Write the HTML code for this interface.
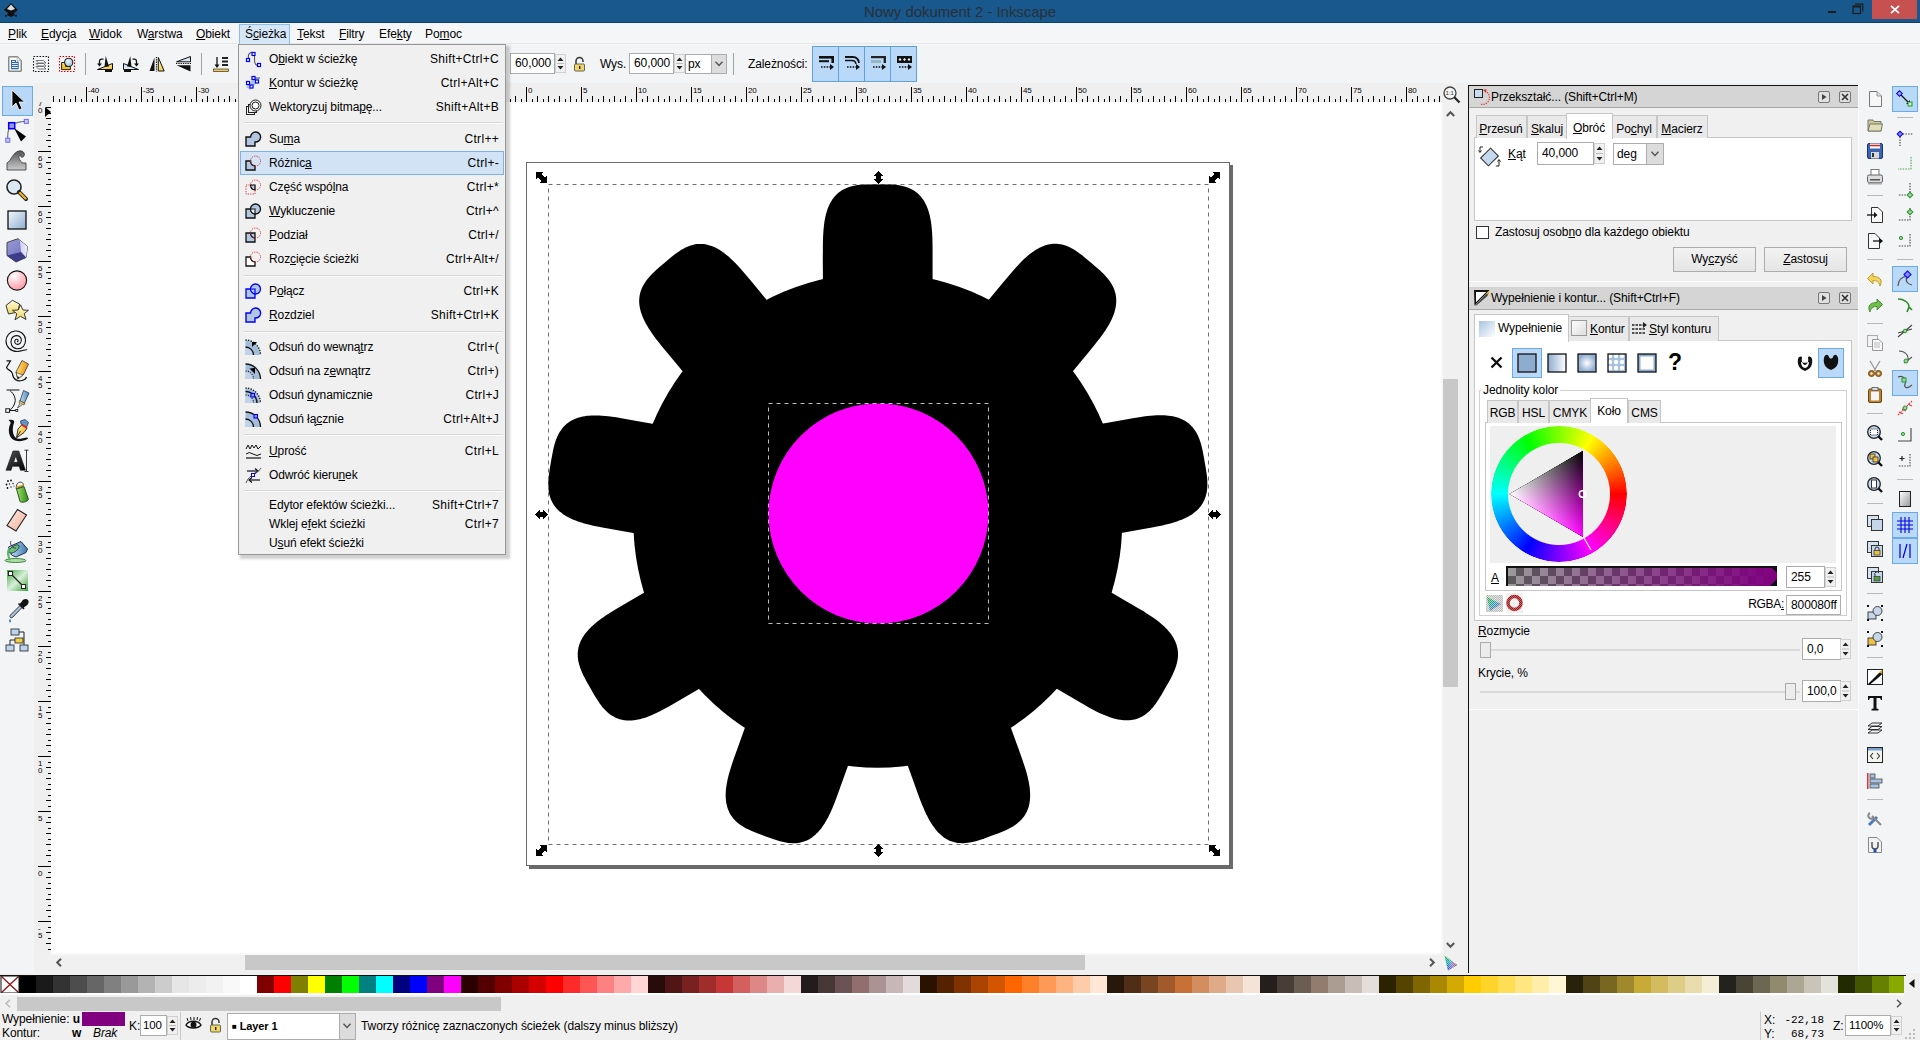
<!DOCTYPE html><html><head><meta charset="utf-8"><style>
*{box-sizing:border-box}
body{margin:0;width:1920px;height:1040px;position:relative;overflow:hidden;background:#f0f0f0;font-family:"Liberation Sans",sans-serif;font-size:12px;color:#000}
.t{position:absolute;white-space:pre;line-height:14px;letter-spacing:-0.1px}
svg{position:absolute;overflow:visible}
u{text-decoration:underline;text-underline-offset:1px}
</style></head><body><div style="position:absolute;left:0px;top:0px;width:1920px;height:22px;background:#18588c"></div><div style="position:absolute;left:0px;top:22px;width:1920px;height:1px;background:#0e3f6b"></div><div class="t" style="left:864px;top:4px;font-size:15px;line-height:15px;color:#2a3038;letter-spacing:-0.05px">Nowy dokument 2 - Inkscape</div><svg style="left:2px;top:2px" width="18" height="18" viewBox="0 0 18 18"><path d="M9 1 L16 8 L12 11 L13 13 L9 15 L5 13 L6 11 L2 8 Z" fill="#111"/><path d="M9 2.5 L13 7 L9 8.5 L5 7 Z" fill="#ddd"/><rect x="3" y="13" width="2" height="1.5" fill="#111"/><rect x="13" y="13" width="2" height="1.5" fill="#111"/></svg><div style="position:absolute;left:1828px;top:11px;width:8px;height:2px;background:#1c1c1c"></div><svg style="left:1852px;top:3px" width="12" height="12" viewBox="0 0 12 12"><rect x="1" y="3" width="7.5" height="7.5" fill="none" stroke="#1c1c1c" stroke-width="1.2"/><rect x="1" y="3" width="7.5" height="1.5" fill="#1c1c1c"/><path d="M3 1.2 H10.8 V8.5" fill="none" stroke="#1c1c1c" stroke-width="1.2"/></svg><div style="position:absolute;left:1872px;top:0px;width:45px;height:19px;background:#c75050"></div><svg style="left:1890px;top:5px" width="10" height="9" viewBox="0 0 10 9"><path d="M1 0.8 L9 8.2 M9 0.8 L1 8.2" stroke="#fff" stroke-width="1.8"/></svg><div style="position:absolute;left:0px;top:23px;width:1920px;height:20px;background:#f5f6f7"></div><div style="position:absolute;left:0px;top:43px;width:1920px;height:1px;background:#e6e7e8"></div><div style="position:absolute;left:239px;top:24px;width:51px;height:20px;background:#d5e6f7;border:1px solid #8cbdeb;border-bottom:none"></div><div class="t" style="left:8px;top:27px;"><u>P</u>lik</div><div class="t" style="left:41px;top:27px;"><u>E</u>dycja</div><div class="t" style="left:89px;top:27px;"><u>W</u>idok</div><div class="t" style="left:137px;top:27px;">W<u>a</u>rstwa</div><div class="t" style="left:196px;top:27px;"><u>O</u>biekt</div><div class="t" style="left:245px;top:27px;">Ś<u>c</u>ieżka</div><div class="t" style="left:297px;top:27px;"><u>T</u>ekst</div><div class="t" style="left:339px;top:27px;"><u>F</u>iltry</div><div class="t" style="left:379px;top:27px;">Efe<u>k</u>ty</div><div class="t" style="left:425px;top:27px;">Po<u>m</u>oc</div><div style="position:absolute;left:0px;top:44px;width:1920px;height:39px;background:#f3f4f6"></div><svg style="left:8px;top:56px" width="14" height="16" viewBox="0 0 14 16"><path d="M0.75 1.5 A0.75 0.75 0 0 1 1.5 0.75 H9.2 L13.25 4.8 V14.5 A0.75 0.75 0 0 1 12.5 15.25 H1.5 A0.75 0.75 0 0 1 0.75 14.5 Z" fill="#fff" stroke="#8a8a85" stroke-width="1.5"/><path d="M9.2 1 V4.8 H13" fill="#eee" stroke="#aaa" stroke-width="0.8"/><path d="M3 4 H8 V5.8 H10.7 V13.2 H3 Z" fill="#2f65b5"/><rect x="4" y="5" width="3" height="0.9" fill="#fff"/><rect x="4" y="7" width="5.8" height="0.9" fill="#fff"/><rect x="4" y="9" width="5.8" height="0.9" fill="#fff"/><rect x="4" y="11" width="5.8" height="0.9" fill="#fff"/></svg><svg style="left:33px;top:56px" width="16" height="16" viewBox="0 0 16 16"><rect x="0.5" y="0.5" width="15" height="15" fill="none" stroke="#111" stroke-width="1.1" stroke-dasharray="1.6 1.4"/><g fill="#fbfbfb" stroke="#6a6a6a" stroke-width="0.9"><path d="M3 10.5 H10.5 L13 13 H5.5 Z"/><path d="M3 7.5 H10.5 L13 10 H5.5 Z"/><path d="M3 4.5 H10.5 L13 7 H5.5 Z"/></g></svg><svg style="left:59px;top:56px" width="16" height="16" viewBox="0 0 16 16"><defs><linearGradient id="ly" x1="0" y1="0" x2="0" y2="1"><stop offset="0" stop-color="#ffe26a"/><stop offset="1" stop-color="#f5b800"/></linearGradient><radialGradient id="lb" cx="0.4" cy="0.35" r="0.7"><stop offset="0" stop-color="#eef5fb"/><stop offset="1" stop-color="#9fbcdc"/></radialGradient></defs><rect x="0.5" y="0.5" width="15" height="15" fill="none" stroke="#e00000" stroke-width="1.1" stroke-dasharray="1.6 1.4"/><path d="M2.6 6.5 H6.5 V10.5 H11.4 V13.6 H2.6 Z" fill="url(#ly)" stroke="#222" stroke-width="1"/><circle cx="9.7" cy="6.4" r="4.1" fill="url(#lb)" stroke="#222" stroke-width="1.1"/></svg><div style="position:absolute;left:85px;top:53px;width:1px;height:22px;background:#a0a0a0"></div><svg style="left:97px;top:56px" width="17" height="17" viewBox="0 0 17 17"><defs><linearGradient id="yg0" x1="0" y1="0" x2="1" y2="1"><stop offset="0" stop-color="#fff6c0"/><stop offset="1" stop-color="#f2c230"/></linearGradient><linearGradient id="bg0" x1="0" y1="0" x2="1" y2="1"><stop offset="0" stop-color="#a8c4e4"/><stop offset="1" stop-color="#eef4fb"/></linearGradient></defs><path d="M0.5 13.5 L15.5 7.5 V13.5 Z" fill="url(#yg0)" stroke="#111" stroke-width="1"/><path d="M8.7 0 L12 10.5 L7.5 11 Z" fill="#111"/><rect x="8" y="13.5" width="7" height="2.5" fill="#111"/><path d="M6.5 3.2 H4.3 A2 2 0 0 0 2.5 5.2 V8" fill="none" stroke="#111" stroke-width="1.3"/><path d="M0 7.5 H5 L2.5 10.5 Z" fill="#111"/></svg><svg style="left:123px;top:56px" width="17" height="17" viewBox="0 0 17 17"><defs><linearGradient id="yg1" x1="0" y1="0" x2="1" y2="1"><stop offset="0" stop-color="#fff6c0"/><stop offset="1" stop-color="#f2c230"/></linearGradient><linearGradient id="bg1" x1="0" y1="0" x2="1" y2="1"><stop offset="0" stop-color="#a8c4e4"/><stop offset="1" stop-color="#eef4fb"/></linearGradient></defs><g transform="translate(16,0) scale(-1,1)"><path d="M0.5 13.5 L15.5 7.5 V13.5 Z" fill="url(#bg1)" stroke="#111" stroke-width="1"/><path d="M8.7 0 L12 10.5 L7.5 11 Z" fill="#111"/><rect x="8" y="13.5" width="7" height="2.5" fill="#111"/><path d="M6.5 3.2 H4.3 A2 2 0 0 0 2.5 5.2 V8" fill="none" stroke="#111" stroke-width="1.3"/><path d="M0 7.5 H5 L2.5 10.5 Z" fill="#111"/></g></svg><svg style="left:149px;top:56px" width="17" height="17" viewBox="0 0 17 17"><defs><linearGradient id="yg2" x1="0" y1="0" x2="1" y2="1"><stop offset="0" stop-color="#fff6c0"/><stop offset="1" stop-color="#f2c230"/></linearGradient><linearGradient id="bg2" x1="0" y1="0" x2="1" y2="1"><stop offset="0" stop-color="#a8c4e4"/><stop offset="1" stop-color="#eef4fb"/></linearGradient></defs><path d="M0.5 15 L5.5 1.5 V15 Z" fill="#111"/><path d="M7.5 1 V15.5" stroke="#111" stroke-width="1.2" stroke-dasharray="1.3 1"/><path d="M9.3 1.5 L15.2 15 H9.3 Z" fill="url(#yg2)" stroke="#111" stroke-width="1"/></svg><svg style="left:176px;top:56px" width="17" height="17" viewBox="0 0 17 17"><defs><linearGradient id="yg3" x1="0" y1="0" x2="1" y2="1"><stop offset="0" stop-color="#fff6c0"/><stop offset="1" stop-color="#f2c230"/></linearGradient><linearGradient id="bg3" x1="0" y1="0" x2="1" y2="1"><stop offset="0" stop-color="#a8c4e4"/><stop offset="1" stop-color="#eef4fb"/></linearGradient></defs><path d="M0.5 5.8 L14.5 0.5 V5.8 Z" fill="url(#bg3)" stroke="#111" stroke-width="1"/><path d="M0 7.5 H15" stroke="#111" stroke-width="1.2" stroke-dasharray="1.3 1"/><path d="M0.5 9.3 H14.5 V15.5 Z" fill="#111"/></svg><div style="position:absolute;left:201px;top:53px;width:1px;height:22px;background:#a0a0a0"></div><svg style="left:213px;top:56px" width="16" height="16" viewBox="0 0 16 16"><path d="M4 1 V11" stroke="#111" stroke-width="1.3"/><path d="M1.5 8.5 L4 12 L6.5 8.5 Z" fill="#111"/><rect x="9" y="1" width="6" height="2" fill="#222"/><rect x="9" y="4.5" width="6" height="2" fill="#222"/><rect x="9" y="8" width="6" height="2" fill="#222"/><rect x="0.5" y="13" width="15" height="2.5" fill="#f2c94c" stroke="#333" stroke-width="0.7"/></svg><div style="position:absolute;left:510px;top:53px;width:45px;height:21px;background:#fff;border:1px solid #acacac;"><div class="t" style="left:4px;top:2px">60,000</div></div><div style="position:absolute;left:555px;top:54px;width:11px;height:19px;background:#f0f0f0;border:1px solid #d0d0d0"></div><svg style="left:557px;top:57px" width="7" height="13" viewBox="0 0 7 13"><path d="M0.5 4 L3.5 0.5 L6.5 4 Z" fill="#222"/><path d="M0.5 9 L3.5 12.5 L6.5 9 Z" fill="#222"/><rect x="0" y="6.0" width="7" height="1" fill="#bbb"/></svg><svg style="left:573px;top:56px" width="13" height="16" viewBox="0 0 13 16"><path d="M3 8 V5 A3.5 3.5 0 0 1 10 5 V6" fill="none" stroke="#333" stroke-width="1.5"/><rect x="1.5" y="8" width="10" height="7" rx="1" fill="#f0d860" stroke="#555" stroke-width="0.9"/><rect x="6" y="10" width="1.4" height="3" fill="#222"/></svg><div class="t" style="left:600px;top:57px;">Wys.</div><div style="position:absolute;left:629px;top:53px;width:45px;height:21px;background:#fff;border:1px solid #acacac;"><div class="t" style="left:4px;top:2px">60,000</div></div><div style="position:absolute;left:674px;top:54px;width:11px;height:19px;background:#f0f0f0;border:1px solid #d0d0d0"></div><svg style="left:676px;top:57px" width="7" height="13" viewBox="0 0 7 13"><path d="M0.5 4 L3.5 0.5 L6.5 4 Z" fill="#222"/><path d="M0.5 9 L3.5 12.5 L6.5 9 Z" fill="#222"/><rect x="0" y="6.0" width="7" height="1" fill="#bbb"/></svg><div style="position:absolute;left:685px;top:54px;width:42px;height:20px;background:#fff;border:1px solid #acacac"><div class="t" style="left:2px;top:2px">px</div></div><div style="position:absolute;left:711px;top:54px;width:16px;height:20px;background:#dcdcdc;border:1px solid #acacac"></div><svg style="left:715px;top:61px" width="8" height="6" viewBox="0 0 8 6"><path d="M0.5 0.8 L4 4.5 L7.5 0.8" fill="none" stroke="#555" stroke-width="1.4"/></svg><div style="position:absolute;left:733px;top:53px;width:1px;height:22px;background:#a0a0a0"></div><div class="t" style="left:748px;top:57px;">Zależności:</div><div style="position:absolute;left:812px;top:46px;width:27px;height:36px;background:#bad8f7;border:1px solid #5fa0e0"></div><div style="position:absolute;left:838px;top:46px;width:27px;height:36px;background:#bad8f7;border:1px solid #5fa0e0"></div><div style="position:absolute;left:864px;top:46px;width:27px;height:36px;background:#bad8f7;border:1px solid #5fa0e0"></div><div style="position:absolute;left:890px;top:46px;width:27px;height:36px;background:#bad8f7;border:1px solid #5fa0e0"></div><svg style="left:818px;top:55px" width="17" height="17" viewBox="0 0 17 17"><rect x="1" y="1" width="15" height="2.6" fill="#111"/><rect x="13.4" y="1" width="2.6" height="7" fill="#111"/><rect x="1" y="5.2" width="10" height="2" fill="#111"/><path d="M3 12 H12" stroke="#111" stroke-dasharray="1.6 1.2" stroke-width="1.3"/><path d="M12 9 L16 12 L12 15 Z" fill="#111"/></svg><svg style="left:844px;top:55px" width="17" height="17" viewBox="0 0 17 17"><path d="M1 2 H9 A6 6 0 0 1 15 8" fill="none" stroke="#111" stroke-width="1.8"/><path d="M1 5.5 H8 A4 4 0 0 1 12 9" fill="none" stroke="#111" stroke-width="1.3"/><path d="M3 12 H12" stroke="#111" stroke-dasharray="1.6 1.2" stroke-width="1.3"/><path d="M12 9 L16 12 L12 15 Z" fill="#111"/></svg><svg style="left:870px;top:55px" width="17" height="17" viewBox="0 0 17 17"><rect x="1" y="1" width="15" height="2.2" fill="#222"/><rect x="13.6" y="1" width="2.4" height="7" fill="#222"/><rect x="1" y="5" width="10" height="3" fill="#8aa" opacity="0.7"/><path d="M3 12 H12" stroke="#111" stroke-dasharray="1.6 1.2" stroke-width="1.3"/><path d="M12 9 L16 12 L12 15 Z" fill="#111"/></svg><svg style="left:896px;top:55px" width="17" height="17" viewBox="0 0 17 17"><rect x="1" y="1" width="15" height="7" fill="#111"/><path d="M4 3 l1.5 1.5 l-1.5 1.5 l-1.5 -1.5 Z M8.5 3 l1.5 1.5 l-1.5 1.5 l-1.5 -1.5 Z M13 3 l1.5 1.5 l-1.5 1.5 l-1.5 -1.5 Z" fill="#eee"/><path d="M3 12 H12" stroke="#111" stroke-dasharray="1.6 1.2" stroke-width="1.3"/><path d="M12 9 L16 12 L12 15 Z" fill="#111"/></svg><div style="position:absolute;left:34px;top:83px;width:1409px;height:19px;background:#efefef"></div><div style="position:absolute;left:34px;top:102px;width:17px;height:851px;background:#efefef"></div><svg style="left:34px;top:83px;overflow:hidden" width="1409" height="19" viewBox="0 0 1409 19"><g><rect x="19" y="13" width="1" height="6" fill="#000"/><rect x="25" y="16" width="1" height="3" fill="#000"/><rect x="30" y="13" width="1" height="6" fill="#000"/><rect x="36" y="16" width="1" height="3" fill="#000"/><rect x="41" y="13" width="1" height="6" fill="#000"/><rect x="47" y="16" width="1" height="3" fill="#000"/><rect x="52" y="4" width="1" height="15" fill="#000"/><rect x="58" y="16" width="1" height="3" fill="#000"/><rect x="63" y="13" width="1" height="6" fill="#000"/><rect x="69" y="16" width="1" height="3" fill="#000"/><rect x="74" y="13" width="1" height="6" fill="#000"/><rect x="80" y="16" width="1" height="3" fill="#000"/><rect x="85" y="13" width="1" height="6" fill="#000"/><rect x="91" y="16" width="1" height="3" fill="#000"/><rect x="96" y="13" width="1" height="6" fill="#000"/><rect x="102" y="16" width="1" height="3" fill="#000"/><rect x="107" y="4" width="1" height="15" fill="#000"/><rect x="113" y="16" width="1" height="3" fill="#000"/><rect x="118" y="13" width="1" height="6" fill="#000"/><rect x="124" y="16" width="1" height="3" fill="#000"/><rect x="129" y="13" width="1" height="6" fill="#000"/><rect x="135" y="16" width="1" height="3" fill="#000"/><rect x="140" y="13" width="1" height="6" fill="#000"/><rect x="146" y="16" width="1" height="3" fill="#000"/><rect x="151" y="13" width="1" height="6" fill="#000"/><rect x="157" y="16" width="1" height="3" fill="#000"/><rect x="162" y="4" width="1" height="15" fill="#000"/><rect x="168" y="16" width="1" height="3" fill="#000"/><rect x="173" y="13" width="1" height="6" fill="#000"/><rect x="179" y="16" width="1" height="3" fill="#000"/><rect x="184" y="13" width="1" height="6" fill="#000"/><rect x="190" y="16" width="1" height="3" fill="#000"/><rect x="195" y="13" width="1" height="6" fill="#000"/><rect x="201" y="16" width="1" height="3" fill="#000"/><rect x="206" y="13" width="1" height="6" fill="#000"/><rect x="212" y="16" width="1" height="3" fill="#000"/><rect x="217" y="4" width="1" height="15" fill="#000"/><rect x="223" y="16" width="1" height="3" fill="#000"/><rect x="228" y="13" width="1" height="6" fill="#000"/><rect x="234" y="16" width="1" height="3" fill="#000"/><rect x="239" y="13" width="1" height="6" fill="#000"/><rect x="245" y="16" width="1" height="3" fill="#000"/><rect x="250" y="13" width="1" height="6" fill="#000"/><rect x="256" y="16" width="1" height="3" fill="#000"/><rect x="261" y="13" width="1" height="6" fill="#000"/><rect x="267" y="16" width="1" height="3" fill="#000"/><rect x="272" y="4" width="1" height="15" fill="#000"/><rect x="278" y="16" width="1" height="3" fill="#000"/><rect x="283" y="13" width="1" height="6" fill="#000"/><rect x="289" y="16" width="1" height="3" fill="#000"/><rect x="294" y="13" width="1" height="6" fill="#000"/><rect x="300" y="16" width="1" height="3" fill="#000"/><rect x="305" y="13" width="1" height="6" fill="#000"/><rect x="311" y="16" width="1" height="3" fill="#000"/><rect x="316" y="13" width="1" height="6" fill="#000"/><rect x="322" y="16" width="1" height="3" fill="#000"/><rect x="327" y="4" width="1" height="15" fill="#000"/><rect x="333" y="16" width="1" height="3" fill="#000"/><rect x="338" y="13" width="1" height="6" fill="#000"/><rect x="344" y="16" width="1" height="3" fill="#000"/><rect x="349" y="13" width="1" height="6" fill="#000"/><rect x="355" y="16" width="1" height="3" fill="#000"/><rect x="360" y="13" width="1" height="6" fill="#000"/><rect x="366" y="16" width="1" height="3" fill="#000"/><rect x="371" y="13" width="1" height="6" fill="#000"/><rect x="377" y="16" width="1" height="3" fill="#000"/><rect x="382" y="4" width="1" height="15" fill="#000"/><rect x="388" y="16" width="1" height="3" fill="#000"/><rect x="393" y="13" width="1" height="6" fill="#000"/><rect x="399" y="16" width="1" height="3" fill="#000"/><rect x="404" y="13" width="1" height="6" fill="#000"/><rect x="410" y="16" width="1" height="3" fill="#000"/><rect x="415" y="13" width="1" height="6" fill="#000"/><rect x="421" y="16" width="1" height="3" fill="#000"/><rect x="426" y="13" width="1" height="6" fill="#000"/><rect x="432" y="16" width="1" height="3" fill="#000"/><rect x="437" y="4" width="1" height="15" fill="#000"/><rect x="443" y="16" width="1" height="3" fill="#000"/><rect x="448" y="13" width="1" height="6" fill="#000"/><rect x="454" y="16" width="1" height="3" fill="#000"/><rect x="459" y="13" width="1" height="6" fill="#000"/><rect x="465" y="16" width="1" height="3" fill="#000"/><rect x="470" y="13" width="1" height="6" fill="#000"/><rect x="476" y="16" width="1" height="3" fill="#000"/><rect x="481" y="13" width="1" height="6" fill="#000"/><rect x="487" y="16" width="1" height="3" fill="#000"/><rect x="492" y="4" width="1" height="15" fill="#000"/><rect x="498" y="16" width="1" height="3" fill="#000"/><rect x="503" y="13" width="1" height="6" fill="#000"/><rect x="509" y="16" width="1" height="3" fill="#000"/><rect x="514" y="13" width="1" height="6" fill="#000"/><rect x="520" y="16" width="1" height="3" fill="#000"/><rect x="525" y="13" width="1" height="6" fill="#000"/><rect x="531" y="16" width="1" height="3" fill="#000"/><rect x="536" y="13" width="1" height="6" fill="#000"/><rect x="542" y="16" width="1" height="3" fill="#000"/><rect x="547" y="4" width="1" height="15" fill="#000"/><rect x="553" y="16" width="1" height="3" fill="#000"/><rect x="558" y="13" width="1" height="6" fill="#000"/><rect x="564" y="16" width="1" height="3" fill="#000"/><rect x="569" y="13" width="1" height="6" fill="#000"/><rect x="575" y="16" width="1" height="3" fill="#000"/><rect x="580" y="13" width="1" height="6" fill="#000"/><rect x="586" y="16" width="1" height="3" fill="#000"/><rect x="591" y="13" width="1" height="6" fill="#000"/><rect x="597" y="16" width="1" height="3" fill="#000"/><rect x="602" y="4" width="1" height="15" fill="#000"/><rect x="608" y="16" width="1" height="3" fill="#000"/><rect x="613" y="13" width="1" height="6" fill="#000"/><rect x="619" y="16" width="1" height="3" fill="#000"/><rect x="624" y="13" width="1" height="6" fill="#000"/><rect x="630" y="16" width="1" height="3" fill="#000"/><rect x="635" y="13" width="1" height="6" fill="#000"/><rect x="641" y="16" width="1" height="3" fill="#000"/><rect x="646" y="13" width="1" height="6" fill="#000"/><rect x="652" y="16" width="1" height="3" fill="#000"/><rect x="657" y="4" width="1" height="15" fill="#000"/><rect x="663" y="16" width="1" height="3" fill="#000"/><rect x="668" y="13" width="1" height="6" fill="#000"/><rect x="674" y="16" width="1" height="3" fill="#000"/><rect x="679" y="13" width="1" height="6" fill="#000"/><rect x="685" y="16" width="1" height="3" fill="#000"/><rect x="690" y="13" width="1" height="6" fill="#000"/><rect x="696" y="16" width="1" height="3" fill="#000"/><rect x="701" y="13" width="1" height="6" fill="#000"/><rect x="707" y="16" width="1" height="3" fill="#000"/><rect x="712" y="4" width="1" height="15" fill="#000"/><rect x="718" y="16" width="1" height="3" fill="#000"/><rect x="723" y="13" width="1" height="6" fill="#000"/><rect x="729" y="16" width="1" height="3" fill="#000"/><rect x="734" y="13" width="1" height="6" fill="#000"/><rect x="740" y="16" width="1" height="3" fill="#000"/><rect x="745" y="13" width="1" height="6" fill="#000"/><rect x="751" y="16" width="1" height="3" fill="#000"/><rect x="756" y="13" width="1" height="6" fill="#000"/><rect x="762" y="16" width="1" height="3" fill="#000"/><rect x="767" y="4" width="1" height="15" fill="#000"/><rect x="773" y="16" width="1" height="3" fill="#000"/><rect x="778" y="13" width="1" height="6" fill="#000"/><rect x="784" y="16" width="1" height="3" fill="#000"/><rect x="789" y="13" width="1" height="6" fill="#000"/><rect x="795" y="16" width="1" height="3" fill="#000"/><rect x="800" y="13" width="1" height="6" fill="#000"/><rect x="806" y="16" width="1" height="3" fill="#000"/><rect x="811" y="13" width="1" height="6" fill="#000"/><rect x="817" y="16" width="1" height="3" fill="#000"/><rect x="822" y="4" width="1" height="15" fill="#000"/><rect x="828" y="16" width="1" height="3" fill="#000"/><rect x="833" y="13" width="1" height="6" fill="#000"/><rect x="839" y="16" width="1" height="3" fill="#000"/><rect x="844" y="13" width="1" height="6" fill="#000"/><rect x="850" y="16" width="1" height="3" fill="#000"/><rect x="855" y="13" width="1" height="6" fill="#000"/><rect x="861" y="16" width="1" height="3" fill="#000"/><rect x="866" y="13" width="1" height="6" fill="#000"/><rect x="872" y="16" width="1" height="3" fill="#000"/><rect x="877" y="4" width="1" height="15" fill="#000"/><rect x="883" y="16" width="1" height="3" fill="#000"/><rect x="888" y="13" width="1" height="6" fill="#000"/><rect x="894" y="16" width="1" height="3" fill="#000"/><rect x="899" y="13" width="1" height="6" fill="#000"/><rect x="905" y="16" width="1" height="3" fill="#000"/><rect x="910" y="13" width="1" height="6" fill="#000"/><rect x="916" y="16" width="1" height="3" fill="#000"/><rect x="921" y="13" width="1" height="6" fill="#000"/><rect x="927" y="16" width="1" height="3" fill="#000"/><rect x="932" y="4" width="1" height="15" fill="#000"/><rect x="938" y="16" width="1" height="3" fill="#000"/><rect x="943" y="13" width="1" height="6" fill="#000"/><rect x="949" y="16" width="1" height="3" fill="#000"/><rect x="954" y="13" width="1" height="6" fill="#000"/><rect x="960" y="16" width="1" height="3" fill="#000"/><rect x="965" y="13" width="1" height="6" fill="#000"/><rect x="971" y="16" width="1" height="3" fill="#000"/><rect x="976" y="13" width="1" height="6" fill="#000"/><rect x="982" y="16" width="1" height="3" fill="#000"/><rect x="987" y="4" width="1" height="15" fill="#000"/><rect x="993" y="16" width="1" height="3" fill="#000"/><rect x="998" y="13" width="1" height="6" fill="#000"/><rect x="1004" y="16" width="1" height="3" fill="#000"/><rect x="1009" y="13" width="1" height="6" fill="#000"/><rect x="1015" y="16" width="1" height="3" fill="#000"/><rect x="1020" y="13" width="1" height="6" fill="#000"/><rect x="1026" y="16" width="1" height="3" fill="#000"/><rect x="1031" y="13" width="1" height="6" fill="#000"/><rect x="1037" y="16" width="1" height="3" fill="#000"/><rect x="1042" y="4" width="1" height="15" fill="#000"/><rect x="1048" y="16" width="1" height="3" fill="#000"/><rect x="1053" y="13" width="1" height="6" fill="#000"/><rect x="1059" y="16" width="1" height="3" fill="#000"/><rect x="1064" y="13" width="1" height="6" fill="#000"/><rect x="1070" y="16" width="1" height="3" fill="#000"/><rect x="1075" y="13" width="1" height="6" fill="#000"/><rect x="1081" y="16" width="1" height="3" fill="#000"/><rect x="1086" y="13" width="1" height="6" fill="#000"/><rect x="1092" y="16" width="1" height="3" fill="#000"/><rect x="1097" y="4" width="1" height="15" fill="#000"/><rect x="1103" y="16" width="1" height="3" fill="#000"/><rect x="1108" y="13" width="1" height="6" fill="#000"/><rect x="1114" y="16" width="1" height="3" fill="#000"/><rect x="1119" y="13" width="1" height="6" fill="#000"/><rect x="1125" y="16" width="1" height="3" fill="#000"/><rect x="1130" y="13" width="1" height="6" fill="#000"/><rect x="1136" y="16" width="1" height="3" fill="#000"/><rect x="1141" y="13" width="1" height="6" fill="#000"/><rect x="1147" y="16" width="1" height="3" fill="#000"/><rect x="1152" y="4" width="1" height="15" fill="#000"/><rect x="1158" y="16" width="1" height="3" fill="#000"/><rect x="1163" y="13" width="1" height="6" fill="#000"/><rect x="1169" y="16" width="1" height="3" fill="#000"/><rect x="1174" y="13" width="1" height="6" fill="#000"/><rect x="1180" y="16" width="1" height="3" fill="#000"/><rect x="1185" y="13" width="1" height="6" fill="#000"/><rect x="1191" y="16" width="1" height="3" fill="#000"/><rect x="1196" y="13" width="1" height="6" fill="#000"/><rect x="1202" y="16" width="1" height="3" fill="#000"/><rect x="1207" y="4" width="1" height="15" fill="#000"/><rect x="1213" y="16" width="1" height="3" fill="#000"/><rect x="1218" y="13" width="1" height="6" fill="#000"/><rect x="1224" y="16" width="1" height="3" fill="#000"/><rect x="1229" y="13" width="1" height="6" fill="#000"/><rect x="1235" y="16" width="1" height="3" fill="#000"/><rect x="1240" y="13" width="1" height="6" fill="#000"/><rect x="1246" y="16" width="1" height="3" fill="#000"/><rect x="1251" y="13" width="1" height="6" fill="#000"/><rect x="1257" y="16" width="1" height="3" fill="#000"/><rect x="1262" y="4" width="1" height="15" fill="#000"/><rect x="1268" y="16" width="1" height="3" fill="#000"/><rect x="1273" y="13" width="1" height="6" fill="#000"/><rect x="1279" y="16" width="1" height="3" fill="#000"/><rect x="1284" y="13" width="1" height="6" fill="#000"/><rect x="1290" y="16" width="1" height="3" fill="#000"/><rect x="1295" y="13" width="1" height="6" fill="#000"/><rect x="1301" y="16" width="1" height="3" fill="#000"/><rect x="1306" y="13" width="1" height="6" fill="#000"/><rect x="1312" y="16" width="1" height="3" fill="#000"/><rect x="1317" y="4" width="1" height="15" fill="#000"/><rect x="1323" y="16" width="1" height="3" fill="#000"/><rect x="1328" y="13" width="1" height="6" fill="#000"/><rect x="1334" y="16" width="1" height="3" fill="#000"/><rect x="1339" y="13" width="1" height="6" fill="#000"/><rect x="1345" y="16" width="1" height="3" fill="#000"/><rect x="1350" y="13" width="1" height="6" fill="#000"/><rect x="1356" y="16" width="1" height="3" fill="#000"/><rect x="1361" y="13" width="1" height="6" fill="#000"/><rect x="1367" y="16" width="1" height="3" fill="#000"/><rect x="1372" y="4" width="1" height="15" fill="#000"/><rect x="1378" y="16" width="1" height="3" fill="#000"/><rect x="1383" y="13" width="1" height="6" fill="#000"/><rect x="1389" y="16" width="1" height="3" fill="#000"/><rect x="1394" y="13" width="1" height="6" fill="#000"/><rect x="1400" y="16" width="1" height="3" fill="#000"/><rect x="1405" y="13" width="1" height="6" fill="#000"/></g><g font-family="Liberation Sans" font-size="8" fill="#000" letter-spacing="-0.2"><text x="54.0" y="9.8">-40</text><text x="109.0" y="9.8">-35</text><text x="164.0" y="9.8">-30</text><text x="219.0" y="9.8">-25</text><text x="274.0" y="9.8">-20</text><text x="329.0" y="9.8">-15</text><text x="384.0" y="9.8">-10</text><text x="439.0" y="9.8">-5</text><text x="494.0" y="9.8">0</text><text x="549.0" y="9.8">5</text><text x="604.0" y="9.8">10</text><text x="659.0" y="9.8">15</text><text x="714.0" y="9.8">20</text><text x="769.0" y="9.8">25</text><text x="824.0" y="9.8">30</text><text x="879.0" y="9.8">35</text><text x="934.0" y="9.8">40</text><text x="989.0" y="9.8">45</text><text x="1044.0" y="9.8">50</text><text x="1099.0" y="9.8">55</text><text x="1154.0" y="9.8">60</text><text x="1209.0" y="9.8">65</text><text x="1264.0" y="9.8">70</text><text x="1319.0" y="9.8">75</text><text x="1374.0" y="9.8">80</text></g></svg><svg style="left:34px;top:102px;overflow:hidden" width="17" height="851" viewBox="0 0 17 851"><g><rect x="12" y="841" width="5" height="1" fill="#000"/><rect x="14" y="847" width="3" height="1" fill="#000"/><rect x="12" y="830" width="5" height="1" fill="#000"/><rect x="14" y="836" width="3" height="1" fill="#000"/><rect x="4" y="819" width="13" height="1" fill="#000"/><rect x="14" y="825" width="3" height="1" fill="#000"/><rect x="12" y="808" width="5" height="1" fill="#000"/><rect x="14" y="814" width="3" height="1" fill="#000"/><rect x="12" y="797" width="5" height="1" fill="#000"/><rect x="14" y="803" width="3" height="1" fill="#000"/><rect x="12" y="786" width="5" height="1" fill="#000"/><rect x="14" y="792" width="3" height="1" fill="#000"/><rect x="12" y="775" width="5" height="1" fill="#000"/><rect x="14" y="781" width="3" height="1" fill="#000"/><rect x="4" y="764" width="13" height="1" fill="#000"/><rect x="14" y="770" width="3" height="1" fill="#000"/><rect x="12" y="753" width="5" height="1" fill="#000"/><rect x="14" y="759" width="3" height="1" fill="#000"/><rect x="12" y="742" width="5" height="1" fill="#000"/><rect x="14" y="748" width="3" height="1" fill="#000"/><rect x="12" y="731" width="5" height="1" fill="#000"/><rect x="14" y="737" width="3" height="1" fill="#000"/><rect x="12" y="720" width="5" height="1" fill="#000"/><rect x="14" y="726" width="3" height="1" fill="#000"/><rect x="4" y="709" width="13" height="1" fill="#000"/><rect x="14" y="715" width="3" height="1" fill="#000"/><rect x="12" y="698" width="5" height="1" fill="#000"/><rect x="14" y="704" width="3" height="1" fill="#000"/><rect x="12" y="687" width="5" height="1" fill="#000"/><rect x="14" y="693" width="3" height="1" fill="#000"/><rect x="12" y="676" width="5" height="1" fill="#000"/><rect x="14" y="682" width="3" height="1" fill="#000"/><rect x="12" y="665" width="5" height="1" fill="#000"/><rect x="14" y="671" width="3" height="1" fill="#000"/><rect x="4" y="654" width="13" height="1" fill="#000"/><rect x="14" y="660" width="3" height="1" fill="#000"/><rect x="12" y="643" width="5" height="1" fill="#000"/><rect x="14" y="649" width="3" height="1" fill="#000"/><rect x="12" y="632" width="5" height="1" fill="#000"/><rect x="14" y="638" width="3" height="1" fill="#000"/><rect x="12" y="621" width="5" height="1" fill="#000"/><rect x="14" y="627" width="3" height="1" fill="#000"/><rect x="12" y="610" width="5" height="1" fill="#000"/><rect x="14" y="616" width="3" height="1" fill="#000"/><rect x="4" y="599" width="13" height="1" fill="#000"/><rect x="14" y="605" width="3" height="1" fill="#000"/><rect x="12" y="588" width="5" height="1" fill="#000"/><rect x="14" y="594" width="3" height="1" fill="#000"/><rect x="12" y="577" width="5" height="1" fill="#000"/><rect x="14" y="583" width="3" height="1" fill="#000"/><rect x="12" y="566" width="5" height="1" fill="#000"/><rect x="14" y="572" width="3" height="1" fill="#000"/><rect x="12" y="555" width="5" height="1" fill="#000"/><rect x="14" y="561" width="3" height="1" fill="#000"/><rect x="4" y="544" width="13" height="1" fill="#000"/><rect x="14" y="550" width="3" height="1" fill="#000"/><rect x="12" y="533" width="5" height="1" fill="#000"/><rect x="14" y="539" width="3" height="1" fill="#000"/><rect x="12" y="522" width="5" height="1" fill="#000"/><rect x="14" y="528" width="3" height="1" fill="#000"/><rect x="12" y="511" width="5" height="1" fill="#000"/><rect x="14" y="517" width="3" height="1" fill="#000"/><rect x="12" y="500" width="5" height="1" fill="#000"/><rect x="14" y="506" width="3" height="1" fill="#000"/><rect x="4" y="489" width="13" height="1" fill="#000"/><rect x="14" y="495" width="3" height="1" fill="#000"/><rect x="12" y="478" width="5" height="1" fill="#000"/><rect x="14" y="484" width="3" height="1" fill="#000"/><rect x="12" y="467" width="5" height="1" fill="#000"/><rect x="14" y="473" width="3" height="1" fill="#000"/><rect x="12" y="456" width="5" height="1" fill="#000"/><rect x="14" y="462" width="3" height="1" fill="#000"/><rect x="12" y="445" width="5" height="1" fill="#000"/><rect x="14" y="451" width="3" height="1" fill="#000"/><rect x="4" y="434" width="13" height="1" fill="#000"/><rect x="14" y="440" width="3" height="1" fill="#000"/><rect x="12" y="423" width="5" height="1" fill="#000"/><rect x="14" y="429" width="3" height="1" fill="#000"/><rect x="12" y="412" width="5" height="1" fill="#000"/><rect x="14" y="418" width="3" height="1" fill="#000"/><rect x="12" y="401" width="5" height="1" fill="#000"/><rect x="14" y="407" width="3" height="1" fill="#000"/><rect x="12" y="390" width="5" height="1" fill="#000"/><rect x="14" y="396" width="3" height="1" fill="#000"/><rect x="4" y="379" width="13" height="1" fill="#000"/><rect x="14" y="385" width="3" height="1" fill="#000"/><rect x="12" y="368" width="5" height="1" fill="#000"/><rect x="14" y="374" width="3" height="1" fill="#000"/><rect x="12" y="357" width="5" height="1" fill="#000"/><rect x="14" y="363" width="3" height="1" fill="#000"/><rect x="12" y="346" width="5" height="1" fill="#000"/><rect x="14" y="352" width="3" height="1" fill="#000"/><rect x="12" y="335" width="5" height="1" fill="#000"/><rect x="14" y="341" width="3" height="1" fill="#000"/><rect x="4" y="324" width="13" height="1" fill="#000"/><rect x="14" y="330" width="3" height="1" fill="#000"/><rect x="12" y="313" width="5" height="1" fill="#000"/><rect x="14" y="319" width="3" height="1" fill="#000"/><rect x="12" y="302" width="5" height="1" fill="#000"/><rect x="14" y="308" width="3" height="1" fill="#000"/><rect x="12" y="291" width="5" height="1" fill="#000"/><rect x="14" y="297" width="3" height="1" fill="#000"/><rect x="12" y="280" width="5" height="1" fill="#000"/><rect x="14" y="286" width="3" height="1" fill="#000"/><rect x="4" y="269" width="13" height="1" fill="#000"/><rect x="14" y="275" width="3" height="1" fill="#000"/><rect x="12" y="258" width="5" height="1" fill="#000"/><rect x="14" y="264" width="3" height="1" fill="#000"/><rect x="12" y="247" width="5" height="1" fill="#000"/><rect x="14" y="253" width="3" height="1" fill="#000"/><rect x="12" y="236" width="5" height="1" fill="#000"/><rect x="14" y="242" width="3" height="1" fill="#000"/><rect x="12" y="225" width="5" height="1" fill="#000"/><rect x="14" y="231" width="3" height="1" fill="#000"/><rect x="4" y="214" width="13" height="1" fill="#000"/><rect x="14" y="220" width="3" height="1" fill="#000"/><rect x="12" y="203" width="5" height="1" fill="#000"/><rect x="14" y="209" width="3" height="1" fill="#000"/><rect x="12" y="192" width="5" height="1" fill="#000"/><rect x="14" y="198" width="3" height="1" fill="#000"/><rect x="12" y="181" width="5" height="1" fill="#000"/><rect x="14" y="187" width="3" height="1" fill="#000"/><rect x="12" y="170" width="5" height="1" fill="#000"/><rect x="14" y="176" width="3" height="1" fill="#000"/><rect x="4" y="159" width="13" height="1" fill="#000"/><rect x="14" y="165" width="3" height="1" fill="#000"/><rect x="12" y="148" width="5" height="1" fill="#000"/><rect x="14" y="154" width="3" height="1" fill="#000"/><rect x="12" y="137" width="5" height="1" fill="#000"/><rect x="14" y="143" width="3" height="1" fill="#000"/><rect x="12" y="126" width="5" height="1" fill="#000"/><rect x="14" y="132" width="3" height="1" fill="#000"/><rect x="12" y="115" width="5" height="1" fill="#000"/><rect x="14" y="121" width="3" height="1" fill="#000"/><rect x="4" y="104" width="13" height="1" fill="#000"/><rect x="14" y="110" width="3" height="1" fill="#000"/><rect x="12" y="93" width="5" height="1" fill="#000"/><rect x="14" y="99" width="3" height="1" fill="#000"/><rect x="12" y="82" width="5" height="1" fill="#000"/><rect x="14" y="88" width="3" height="1" fill="#000"/><rect x="12" y="71" width="5" height="1" fill="#000"/><rect x="14" y="77" width="3" height="1" fill="#000"/><rect x="12" y="60" width="5" height="1" fill="#000"/><rect x="14" y="66" width="3" height="1" fill="#000"/><rect x="4" y="49" width="13" height="1" fill="#000"/><rect x="14" y="55" width="3" height="1" fill="#000"/><rect x="12" y="38" width="5" height="1" fill="#000"/><rect x="14" y="44" width="3" height="1" fill="#000"/><rect x="12" y="27" width="5" height="1" fill="#000"/><rect x="14" y="33" width="3" height="1" fill="#000"/><rect x="12" y="16" width="5" height="1" fill="#000"/><rect x="14" y="22" width="3" height="1" fill="#000"/><rect x="12" y="5" width="5" height="1" fill="#000"/><rect x="14" y="11" width="3" height="1" fill="#000"/></g><g font-family="Liberation Sans" font-size="8" fill="#000"><text x="4" y="829.0">-</text><text x="4" y="836.0">5</text><text x="4" y="774.0">0</text><text x="4" y="719.0">5</text><text x="4" y="664.0">1</text><text x="4" y="671.0">0</text><text x="4" y="609.0">1</text><text x="4" y="616.0">5</text><text x="4" y="554.0">2</text><text x="4" y="561.0">0</text><text x="4" y="499.0">2</text><text x="4" y="506.0">5</text><text x="4" y="444.0">3</text><text x="4" y="451.0">0</text><text x="4" y="389.0">3</text><text x="4" y="396.0">5</text><text x="4" y="334.0">4</text><text x="4" y="341.0">0</text><text x="4" y="279.0">4</text><text x="4" y="286.0">5</text><text x="4" y="224.0">5</text><text x="4" y="231.0">0</text><text x="4" y="169.0">5</text><text x="4" y="176.0">5</text><text x="4" y="114.0">6</text><text x="4" y="121.0">0</text><text x="4" y="59.0">6</text><text x="4" y="66.0">5</text><text x="4" y="4.0">7</text><text x="4" y="11.0">0</text></g></svg><svg style="left:45px;top:107px" width="7" height="10" viewBox="0 0 7 10"><path d="M0 0 L6 5 L0 10 Z" fill="#000"/></svg><div style="position:absolute;left:51px;top:102px;width:1392px;height:851px;background:#fff"></div><svg style="left:0;top:0" width="1920" height="1040" viewBox="0 0 1920 1040"><g clip-path="url(#cv)"><defs><clipPath id="cv"><rect x="51" y="102" width="1392" height="851"/></clipPath></defs><rect x="526.5" y="162.5" width="703" height="703" fill="#fff" stroke="#6a6a6a" stroke-width="1"/><rect x="1230" y="165" width="3" height="704" fill="#6a6a6a"/><rect x="529" y="866" width="704" height="3" fill="#6a6a6a"/><g fill="#000" transform="translate(877.811,520.200) scale(1,1.0122)"><circle cx="0" cy="0" r="244.5"/><path transform="rotate(-0.022)" d="M-54.87,-180.10 L-54.87,-260.10 L-54.84,-269.97 L-54.76,-275.19 L-54.63,-279.43 L-54.45,-283.14 L-54.22,-286.48 L-53.93,-289.54 L-53.60,-292.39 L-53.21,-295.06 L-52.76,-297.58 L-52.27,-299.96 L-51.72,-302.22 L-51.12,-304.36 L-50.47,-306.40 L-49.76,-308.34 L-49.00,-310.19 L-48.18,-311.95 L-47.31,-313.63 L-46.39,-315.22 L-45.41,-316.73 L-44.37,-318.17 L-43.27,-319.53 L-42.11,-320.82 L-40.90,-322.03 L-39.62,-323.17 L-38.27,-324.23 L-36.86,-325.23 L-35.37,-326.15 L-33.82,-327.01 L-32.18,-327.80 L-30.45,-328.51 L-28.64,-329.16 L-26.71,-329.74 L-24.67,-330.25 L-22.49,-330.69 L-20.15,-331.06 L-17.60,-331.37 L-14.77,-331.61 L-11.53,-331.78 L-7.54,-331.88 L0.00,-331.91 L7.54,-331.88 L11.53,-331.78 L14.77,-331.61 L17.60,-331.37 L20.15,-331.06 L22.49,-330.69 L24.67,-330.25 L26.71,-329.74 L28.64,-329.16 L30.45,-328.51 L32.18,-327.80 L33.82,-327.01 L35.37,-326.15 L36.86,-325.23 L38.27,-324.23 L39.62,-323.17 L40.90,-322.03 L42.11,-320.82 L43.27,-319.53 L44.37,-318.17 L45.41,-316.73 L46.39,-315.22 L47.31,-313.63 L48.18,-311.95 L49.00,-310.19 L49.76,-308.34 L50.47,-306.40 L51.12,-304.36 L51.72,-302.22 L52.27,-299.96 L52.76,-297.58 L53.21,-295.06 L53.60,-292.39 L53.93,-289.54 L54.22,-286.48 L54.45,-283.14 L54.63,-279.43 L54.76,-275.19 L54.84,-269.97 L54.87,-260.10 L54.87,-180.10Z"/><path transform="rotate(39.978)" d="M-54.87,-180.10 L-54.87,-260.10 L-54.84,-269.97 L-54.76,-275.19 L-54.63,-279.43 L-54.45,-283.14 L-54.22,-286.48 L-53.93,-289.54 L-53.60,-292.39 L-53.21,-295.06 L-52.76,-297.58 L-52.27,-299.96 L-51.72,-302.22 L-51.12,-304.36 L-50.47,-306.40 L-49.76,-308.34 L-49.00,-310.19 L-48.18,-311.95 L-47.31,-313.63 L-46.39,-315.22 L-45.41,-316.73 L-44.37,-318.17 L-43.27,-319.53 L-42.11,-320.82 L-40.90,-322.03 L-39.62,-323.17 L-38.27,-324.23 L-36.86,-325.23 L-35.37,-326.15 L-33.82,-327.01 L-32.18,-327.80 L-30.45,-328.51 L-28.64,-329.16 L-26.71,-329.74 L-24.67,-330.25 L-22.49,-330.69 L-20.15,-331.06 L-17.60,-331.37 L-14.77,-331.61 L-11.53,-331.78 L-7.54,-331.88 L0.00,-331.91 L7.54,-331.88 L11.53,-331.78 L14.77,-331.61 L17.60,-331.37 L20.15,-331.06 L22.49,-330.69 L24.67,-330.25 L26.71,-329.74 L28.64,-329.16 L30.45,-328.51 L32.18,-327.80 L33.82,-327.01 L35.37,-326.15 L36.86,-325.23 L38.27,-324.23 L39.62,-323.17 L40.90,-322.03 L42.11,-320.82 L43.27,-319.53 L44.37,-318.17 L45.41,-316.73 L46.39,-315.22 L47.31,-313.63 L48.18,-311.95 L49.00,-310.19 L49.76,-308.34 L50.47,-306.40 L51.12,-304.36 L51.72,-302.22 L52.27,-299.96 L52.76,-297.58 L53.21,-295.06 L53.60,-292.39 L53.93,-289.54 L54.22,-286.48 L54.45,-283.14 L54.63,-279.43 L54.76,-275.19 L54.84,-269.97 L54.87,-260.10 L54.87,-180.10Z"/><path transform="rotate(79.978)" d="M-54.87,-180.10 L-54.87,-260.10 L-54.84,-269.97 L-54.76,-275.19 L-54.63,-279.43 L-54.45,-283.14 L-54.22,-286.48 L-53.93,-289.54 L-53.60,-292.39 L-53.21,-295.06 L-52.76,-297.58 L-52.27,-299.96 L-51.72,-302.22 L-51.12,-304.36 L-50.47,-306.40 L-49.76,-308.34 L-49.00,-310.19 L-48.18,-311.95 L-47.31,-313.63 L-46.39,-315.22 L-45.41,-316.73 L-44.37,-318.17 L-43.27,-319.53 L-42.11,-320.82 L-40.90,-322.03 L-39.62,-323.17 L-38.27,-324.23 L-36.86,-325.23 L-35.37,-326.15 L-33.82,-327.01 L-32.18,-327.80 L-30.45,-328.51 L-28.64,-329.16 L-26.71,-329.74 L-24.67,-330.25 L-22.49,-330.69 L-20.15,-331.06 L-17.60,-331.37 L-14.77,-331.61 L-11.53,-331.78 L-7.54,-331.88 L0.00,-331.91 L7.54,-331.88 L11.53,-331.78 L14.77,-331.61 L17.60,-331.37 L20.15,-331.06 L22.49,-330.69 L24.67,-330.25 L26.71,-329.74 L28.64,-329.16 L30.45,-328.51 L32.18,-327.80 L33.82,-327.01 L35.37,-326.15 L36.86,-325.23 L38.27,-324.23 L39.62,-323.17 L40.90,-322.03 L42.11,-320.82 L43.27,-319.53 L44.37,-318.17 L45.41,-316.73 L46.39,-315.22 L47.31,-313.63 L48.18,-311.95 L49.00,-310.19 L49.76,-308.34 L50.47,-306.40 L51.12,-304.36 L51.72,-302.22 L52.27,-299.96 L52.76,-297.58 L53.21,-295.06 L53.60,-292.39 L53.93,-289.54 L54.22,-286.48 L54.45,-283.14 L54.63,-279.43 L54.76,-275.19 L54.84,-269.97 L54.87,-260.10 L54.87,-180.10Z"/><path transform="rotate(119.978)" d="M-54.87,-180.10 L-54.87,-260.10 L-54.84,-269.97 L-54.76,-275.19 L-54.63,-279.43 L-54.45,-283.14 L-54.22,-286.48 L-53.93,-289.54 L-53.60,-292.39 L-53.21,-295.06 L-52.76,-297.58 L-52.27,-299.96 L-51.72,-302.22 L-51.12,-304.36 L-50.47,-306.40 L-49.76,-308.34 L-49.00,-310.19 L-48.18,-311.95 L-47.31,-313.63 L-46.39,-315.22 L-45.41,-316.73 L-44.37,-318.17 L-43.27,-319.53 L-42.11,-320.82 L-40.90,-322.03 L-39.62,-323.17 L-38.27,-324.23 L-36.86,-325.23 L-35.37,-326.15 L-33.82,-327.01 L-32.18,-327.80 L-30.45,-328.51 L-28.64,-329.16 L-26.71,-329.74 L-24.67,-330.25 L-22.49,-330.69 L-20.15,-331.06 L-17.60,-331.37 L-14.77,-331.61 L-11.53,-331.78 L-7.54,-331.88 L0.00,-331.91 L7.54,-331.88 L11.53,-331.78 L14.77,-331.61 L17.60,-331.37 L20.15,-331.06 L22.49,-330.69 L24.67,-330.25 L26.71,-329.74 L28.64,-329.16 L30.45,-328.51 L32.18,-327.80 L33.82,-327.01 L35.37,-326.15 L36.86,-325.23 L38.27,-324.23 L39.62,-323.17 L40.90,-322.03 L42.11,-320.82 L43.27,-319.53 L44.37,-318.17 L45.41,-316.73 L46.39,-315.22 L47.31,-313.63 L48.18,-311.95 L49.00,-310.19 L49.76,-308.34 L50.47,-306.40 L51.12,-304.36 L51.72,-302.22 L52.27,-299.96 L52.76,-297.58 L53.21,-295.06 L53.60,-292.39 L53.93,-289.54 L54.22,-286.48 L54.45,-283.14 L54.63,-279.43 L54.76,-275.19 L54.84,-269.97 L54.87,-260.10 L54.87,-180.10Z"/><path transform="rotate(159.978)" d="M-54.87,-180.10 L-54.87,-260.10 L-54.84,-269.97 L-54.76,-275.19 L-54.63,-279.43 L-54.45,-283.14 L-54.22,-286.48 L-53.93,-289.54 L-53.60,-292.39 L-53.21,-295.06 L-52.76,-297.58 L-52.27,-299.96 L-51.72,-302.22 L-51.12,-304.36 L-50.47,-306.40 L-49.76,-308.34 L-49.00,-310.19 L-48.18,-311.95 L-47.31,-313.63 L-46.39,-315.22 L-45.41,-316.73 L-44.37,-318.17 L-43.27,-319.53 L-42.11,-320.82 L-40.90,-322.03 L-39.62,-323.17 L-38.27,-324.23 L-36.86,-325.23 L-35.37,-326.15 L-33.82,-327.01 L-32.18,-327.80 L-30.45,-328.51 L-28.64,-329.16 L-26.71,-329.74 L-24.67,-330.25 L-22.49,-330.69 L-20.15,-331.06 L-17.60,-331.37 L-14.77,-331.61 L-11.53,-331.78 L-7.54,-331.88 L0.00,-331.91 L7.54,-331.88 L11.53,-331.78 L14.77,-331.61 L17.60,-331.37 L20.15,-331.06 L22.49,-330.69 L24.67,-330.25 L26.71,-329.74 L28.64,-329.16 L30.45,-328.51 L32.18,-327.80 L33.82,-327.01 L35.37,-326.15 L36.86,-325.23 L38.27,-324.23 L39.62,-323.17 L40.90,-322.03 L42.11,-320.82 L43.27,-319.53 L44.37,-318.17 L45.41,-316.73 L46.39,-315.22 L47.31,-313.63 L48.18,-311.95 L49.00,-310.19 L49.76,-308.34 L50.47,-306.40 L51.12,-304.36 L51.72,-302.22 L52.27,-299.96 L52.76,-297.58 L53.21,-295.06 L53.60,-292.39 L53.93,-289.54 L54.22,-286.48 L54.45,-283.14 L54.63,-279.43 L54.76,-275.19 L54.84,-269.97 L54.87,-260.10 L54.87,-180.10Z"/><path transform="rotate(199.978)" d="M-54.87,-180.10 L-54.87,-260.10 L-54.84,-269.97 L-54.76,-275.19 L-54.63,-279.43 L-54.45,-283.14 L-54.22,-286.48 L-53.93,-289.54 L-53.60,-292.39 L-53.21,-295.06 L-52.76,-297.58 L-52.27,-299.96 L-51.72,-302.22 L-51.12,-304.36 L-50.47,-306.40 L-49.76,-308.34 L-49.00,-310.19 L-48.18,-311.95 L-47.31,-313.63 L-46.39,-315.22 L-45.41,-316.73 L-44.37,-318.17 L-43.27,-319.53 L-42.11,-320.82 L-40.90,-322.03 L-39.62,-323.17 L-38.27,-324.23 L-36.86,-325.23 L-35.37,-326.15 L-33.82,-327.01 L-32.18,-327.80 L-30.45,-328.51 L-28.64,-329.16 L-26.71,-329.74 L-24.67,-330.25 L-22.49,-330.69 L-20.15,-331.06 L-17.60,-331.37 L-14.77,-331.61 L-11.53,-331.78 L-7.54,-331.88 L0.00,-331.91 L7.54,-331.88 L11.53,-331.78 L14.77,-331.61 L17.60,-331.37 L20.15,-331.06 L22.49,-330.69 L24.67,-330.25 L26.71,-329.74 L28.64,-329.16 L30.45,-328.51 L32.18,-327.80 L33.82,-327.01 L35.37,-326.15 L36.86,-325.23 L38.27,-324.23 L39.62,-323.17 L40.90,-322.03 L42.11,-320.82 L43.27,-319.53 L44.37,-318.17 L45.41,-316.73 L46.39,-315.22 L47.31,-313.63 L48.18,-311.95 L49.00,-310.19 L49.76,-308.34 L50.47,-306.40 L51.12,-304.36 L51.72,-302.22 L52.27,-299.96 L52.76,-297.58 L53.21,-295.06 L53.60,-292.39 L53.93,-289.54 L54.22,-286.48 L54.45,-283.14 L54.63,-279.43 L54.76,-275.19 L54.84,-269.97 L54.87,-260.10 L54.87,-180.10Z"/><path transform="rotate(239.978)" d="M-54.87,-180.10 L-54.87,-260.10 L-54.84,-269.97 L-54.76,-275.19 L-54.63,-279.43 L-54.45,-283.14 L-54.22,-286.48 L-53.93,-289.54 L-53.60,-292.39 L-53.21,-295.06 L-52.76,-297.58 L-52.27,-299.96 L-51.72,-302.22 L-51.12,-304.36 L-50.47,-306.40 L-49.76,-308.34 L-49.00,-310.19 L-48.18,-311.95 L-47.31,-313.63 L-46.39,-315.22 L-45.41,-316.73 L-44.37,-318.17 L-43.27,-319.53 L-42.11,-320.82 L-40.90,-322.03 L-39.62,-323.17 L-38.27,-324.23 L-36.86,-325.23 L-35.37,-326.15 L-33.82,-327.01 L-32.18,-327.80 L-30.45,-328.51 L-28.64,-329.16 L-26.71,-329.74 L-24.67,-330.25 L-22.49,-330.69 L-20.15,-331.06 L-17.60,-331.37 L-14.77,-331.61 L-11.53,-331.78 L-7.54,-331.88 L0.00,-331.91 L7.54,-331.88 L11.53,-331.78 L14.77,-331.61 L17.60,-331.37 L20.15,-331.06 L22.49,-330.69 L24.67,-330.25 L26.71,-329.74 L28.64,-329.16 L30.45,-328.51 L32.18,-327.80 L33.82,-327.01 L35.37,-326.15 L36.86,-325.23 L38.27,-324.23 L39.62,-323.17 L40.90,-322.03 L42.11,-320.82 L43.27,-319.53 L44.37,-318.17 L45.41,-316.73 L46.39,-315.22 L47.31,-313.63 L48.18,-311.95 L49.00,-310.19 L49.76,-308.34 L50.47,-306.40 L51.12,-304.36 L51.72,-302.22 L52.27,-299.96 L52.76,-297.58 L53.21,-295.06 L53.60,-292.39 L53.93,-289.54 L54.22,-286.48 L54.45,-283.14 L54.63,-279.43 L54.76,-275.19 L54.84,-269.97 L54.87,-260.10 L54.87,-180.10Z"/><path transform="rotate(279.978)" d="M-54.87,-180.10 L-54.87,-260.10 L-54.84,-269.97 L-54.76,-275.19 L-54.63,-279.43 L-54.45,-283.14 L-54.22,-286.48 L-53.93,-289.54 L-53.60,-292.39 L-53.21,-295.06 L-52.76,-297.58 L-52.27,-299.96 L-51.72,-302.22 L-51.12,-304.36 L-50.47,-306.40 L-49.76,-308.34 L-49.00,-310.19 L-48.18,-311.95 L-47.31,-313.63 L-46.39,-315.22 L-45.41,-316.73 L-44.37,-318.17 L-43.27,-319.53 L-42.11,-320.82 L-40.90,-322.03 L-39.62,-323.17 L-38.27,-324.23 L-36.86,-325.23 L-35.37,-326.15 L-33.82,-327.01 L-32.18,-327.80 L-30.45,-328.51 L-28.64,-329.16 L-26.71,-329.74 L-24.67,-330.25 L-22.49,-330.69 L-20.15,-331.06 L-17.60,-331.37 L-14.77,-331.61 L-11.53,-331.78 L-7.54,-331.88 L0.00,-331.91 L7.54,-331.88 L11.53,-331.78 L14.77,-331.61 L17.60,-331.37 L20.15,-331.06 L22.49,-330.69 L24.67,-330.25 L26.71,-329.74 L28.64,-329.16 L30.45,-328.51 L32.18,-327.80 L33.82,-327.01 L35.37,-326.15 L36.86,-325.23 L38.27,-324.23 L39.62,-323.17 L40.90,-322.03 L42.11,-320.82 L43.27,-319.53 L44.37,-318.17 L45.41,-316.73 L46.39,-315.22 L47.31,-313.63 L48.18,-311.95 L49.00,-310.19 L49.76,-308.34 L50.47,-306.40 L51.12,-304.36 L51.72,-302.22 L52.27,-299.96 L52.76,-297.58 L53.21,-295.06 L53.60,-292.39 L53.93,-289.54 L54.22,-286.48 L54.45,-283.14 L54.63,-279.43 L54.76,-275.19 L54.84,-269.97 L54.87,-260.10 L54.87,-180.10Z"/><path transform="rotate(319.978)" d="M-54.87,-180.10 L-54.87,-260.10 L-54.84,-269.97 L-54.76,-275.19 L-54.63,-279.43 L-54.45,-283.14 L-54.22,-286.48 L-53.93,-289.54 L-53.60,-292.39 L-53.21,-295.06 L-52.76,-297.58 L-52.27,-299.96 L-51.72,-302.22 L-51.12,-304.36 L-50.47,-306.40 L-49.76,-308.34 L-49.00,-310.19 L-48.18,-311.95 L-47.31,-313.63 L-46.39,-315.22 L-45.41,-316.73 L-44.37,-318.17 L-43.27,-319.53 L-42.11,-320.82 L-40.90,-322.03 L-39.62,-323.17 L-38.27,-324.23 L-36.86,-325.23 L-35.37,-326.15 L-33.82,-327.01 L-32.18,-327.80 L-30.45,-328.51 L-28.64,-329.16 L-26.71,-329.74 L-24.67,-330.25 L-22.49,-330.69 L-20.15,-331.06 L-17.60,-331.37 L-14.77,-331.61 L-11.53,-331.78 L-7.54,-331.88 L0.00,-331.91 L7.54,-331.88 L11.53,-331.78 L14.77,-331.61 L17.60,-331.37 L20.15,-331.06 L22.49,-330.69 L24.67,-330.25 L26.71,-329.74 L28.64,-329.16 L30.45,-328.51 L32.18,-327.80 L33.82,-327.01 L35.37,-326.15 L36.86,-325.23 L38.27,-324.23 L39.62,-323.17 L40.90,-322.03 L42.11,-320.82 L43.27,-319.53 L44.37,-318.17 L45.41,-316.73 L46.39,-315.22 L47.31,-313.63 L48.18,-311.95 L49.00,-310.19 L49.76,-308.34 L50.47,-306.40 L51.12,-304.36 L51.72,-302.22 L52.27,-299.96 L52.76,-297.58 L53.21,-295.06 L53.60,-292.39 L53.93,-289.54 L54.22,-286.48 L54.45,-283.14 L54.63,-279.43 L54.76,-275.19 L54.84,-269.97 L54.87,-260.10 L54.87,-180.10Z"/></g><circle cx="878.5" cy="513.5" r="110" fill="#ff00ff"/><rect x="548.5" y="184.5" width="660" height="660" fill="none" stroke="#6e6e6e" stroke-dasharray="4 4" stroke-width="1"/><rect x="768.5" y="403.5" width="220" height="220" fill="none" stroke="#bdbdbd" stroke-dasharray="4 4" stroke-width="1"/><path d="M536,172h1v1h-1zM537,172h1v1h-1zM538,172h1v1h-1zM539,172h1v1h-1zM540,172h1v1h-1zM541,172h1v1h-1zM542,172h1v1h-1zM536,173h1v1h-1zM537,173h1v1h-1zM538,173h1v1h-1zM539,173h1v1h-1zM540,173h1v1h-1zM541,173h1v1h-1zM536,174h1v1h-1zM537,174h1v1h-1zM538,174h1v1h-1zM539,174h1v1h-1zM540,174h1v1h-1zM541,174h1v1h-1zM536,175h1v1h-1zM537,175h1v1h-1zM538,175h1v1h-1zM539,175h1v1h-1zM540,175h1v1h-1zM541,175h1v1h-1zM542,175h1v1h-1zM536,176h1v1h-1zM537,176h1v1h-1zM538,176h1v1h-1zM539,176h1v1h-1zM540,176h1v1h-1zM541,176h1v1h-1zM542,176h1v1h-1zM543,176h1v1h-1zM546,176h1v1h-1zM536,177h1v1h-1zM537,177h1v1h-1zM538,177h1v1h-1zM539,177h1v1h-1zM540,177h1v1h-1zM541,177h1v1h-1zM542,177h1v1h-1zM543,177h1v1h-1zM544,177h1v1h-1zM545,177h1v1h-1zM546,177h1v1h-1zM536,178h1v1h-1zM539,178h1v1h-1zM540,178h1v1h-1zM541,178h1v1h-1zM542,178h1v1h-1zM543,178h1v1h-1zM544,178h1v1h-1zM545,178h1v1h-1zM546,178h1v1h-1zM540,179h1v1h-1zM541,179h1v1h-1zM542,179h1v1h-1zM543,179h1v1h-1zM544,179h1v1h-1zM545,179h1v1h-1zM546,179h1v1h-1zM541,180h1v1h-1zM542,180h1v1h-1zM543,180h1v1h-1zM544,180h1v1h-1zM545,180h1v1h-1zM546,180h1v1h-1zM541,181h1v1h-1zM542,181h1v1h-1zM543,181h1v1h-1zM544,181h1v1h-1zM545,181h1v1h-1zM546,181h1v1h-1zM540,182h1v1h-1zM541,182h1v1h-1zM542,182h1v1h-1zM543,182h1v1h-1zM544,182h1v1h-1zM545,182h1v1h-1zM546,182h1v1h-1z" fill="#000" shape-rendering="crispEdges"/><path d="M1219,172h1v1h-1zM1218,172h1v1h-1zM1217,172h1v1h-1zM1216,172h1v1h-1zM1215,172h1v1h-1zM1214,172h1v1h-1zM1213,172h1v1h-1zM1219,173h1v1h-1zM1218,173h1v1h-1zM1217,173h1v1h-1zM1216,173h1v1h-1zM1215,173h1v1h-1zM1214,173h1v1h-1zM1219,174h1v1h-1zM1218,174h1v1h-1zM1217,174h1v1h-1zM1216,174h1v1h-1zM1215,174h1v1h-1zM1214,174h1v1h-1zM1219,175h1v1h-1zM1218,175h1v1h-1zM1217,175h1v1h-1zM1216,175h1v1h-1zM1215,175h1v1h-1zM1214,175h1v1h-1zM1213,175h1v1h-1zM1219,176h1v1h-1zM1218,176h1v1h-1zM1217,176h1v1h-1zM1216,176h1v1h-1zM1215,176h1v1h-1zM1214,176h1v1h-1zM1213,176h1v1h-1zM1212,176h1v1h-1zM1209,176h1v1h-1zM1219,177h1v1h-1zM1218,177h1v1h-1zM1217,177h1v1h-1zM1216,177h1v1h-1zM1215,177h1v1h-1zM1214,177h1v1h-1zM1213,177h1v1h-1zM1212,177h1v1h-1zM1211,177h1v1h-1zM1210,177h1v1h-1zM1209,177h1v1h-1zM1219,178h1v1h-1zM1216,178h1v1h-1zM1215,178h1v1h-1zM1214,178h1v1h-1zM1213,178h1v1h-1zM1212,178h1v1h-1zM1211,178h1v1h-1zM1210,178h1v1h-1zM1209,178h1v1h-1zM1215,179h1v1h-1zM1214,179h1v1h-1zM1213,179h1v1h-1zM1212,179h1v1h-1zM1211,179h1v1h-1zM1210,179h1v1h-1zM1209,179h1v1h-1zM1214,180h1v1h-1zM1213,180h1v1h-1zM1212,180h1v1h-1zM1211,180h1v1h-1zM1210,180h1v1h-1zM1209,180h1v1h-1zM1214,181h1v1h-1zM1213,181h1v1h-1zM1212,181h1v1h-1zM1211,181h1v1h-1zM1210,181h1v1h-1zM1209,181h1v1h-1zM1215,182h1v1h-1zM1214,182h1v1h-1zM1213,182h1v1h-1zM1212,182h1v1h-1zM1211,182h1v1h-1zM1210,182h1v1h-1zM1209,182h1v1h-1z" fill="#000" shape-rendering="crispEdges"/><path d="M546,845h1v1h-1zM545,845h1v1h-1zM544,845h1v1h-1zM543,845h1v1h-1zM542,845h1v1h-1zM541,845h1v1h-1zM540,845h1v1h-1zM546,846h1v1h-1zM545,846h1v1h-1zM544,846h1v1h-1zM543,846h1v1h-1zM542,846h1v1h-1zM541,846h1v1h-1zM546,847h1v1h-1zM545,847h1v1h-1zM544,847h1v1h-1zM543,847h1v1h-1zM542,847h1v1h-1zM541,847h1v1h-1zM546,848h1v1h-1zM545,848h1v1h-1zM544,848h1v1h-1zM543,848h1v1h-1zM542,848h1v1h-1zM541,848h1v1h-1zM540,848h1v1h-1zM546,849h1v1h-1zM545,849h1v1h-1zM544,849h1v1h-1zM543,849h1v1h-1zM542,849h1v1h-1zM541,849h1v1h-1zM540,849h1v1h-1zM539,849h1v1h-1zM536,849h1v1h-1zM546,850h1v1h-1zM545,850h1v1h-1zM544,850h1v1h-1zM543,850h1v1h-1zM542,850h1v1h-1zM541,850h1v1h-1zM540,850h1v1h-1zM539,850h1v1h-1zM538,850h1v1h-1zM537,850h1v1h-1zM536,850h1v1h-1zM546,851h1v1h-1zM543,851h1v1h-1zM542,851h1v1h-1zM541,851h1v1h-1zM540,851h1v1h-1zM539,851h1v1h-1zM538,851h1v1h-1zM537,851h1v1h-1zM536,851h1v1h-1zM542,852h1v1h-1zM541,852h1v1h-1zM540,852h1v1h-1zM539,852h1v1h-1zM538,852h1v1h-1zM537,852h1v1h-1zM536,852h1v1h-1zM541,853h1v1h-1zM540,853h1v1h-1zM539,853h1v1h-1zM538,853h1v1h-1zM537,853h1v1h-1zM536,853h1v1h-1zM541,854h1v1h-1zM540,854h1v1h-1zM539,854h1v1h-1zM538,854h1v1h-1zM537,854h1v1h-1zM536,854h1v1h-1zM542,855h1v1h-1zM541,855h1v1h-1zM540,855h1v1h-1zM539,855h1v1h-1zM538,855h1v1h-1zM537,855h1v1h-1zM536,855h1v1h-1z" fill="#000" shape-rendering="crispEdges"/><path d="M1209,845h1v1h-1zM1210,845h1v1h-1zM1211,845h1v1h-1zM1212,845h1v1h-1zM1213,845h1v1h-1zM1214,845h1v1h-1zM1215,845h1v1h-1zM1209,846h1v1h-1zM1210,846h1v1h-1zM1211,846h1v1h-1zM1212,846h1v1h-1zM1213,846h1v1h-1zM1214,846h1v1h-1zM1209,847h1v1h-1zM1210,847h1v1h-1zM1211,847h1v1h-1zM1212,847h1v1h-1zM1213,847h1v1h-1zM1214,847h1v1h-1zM1209,848h1v1h-1zM1210,848h1v1h-1zM1211,848h1v1h-1zM1212,848h1v1h-1zM1213,848h1v1h-1zM1214,848h1v1h-1zM1215,848h1v1h-1zM1209,849h1v1h-1zM1210,849h1v1h-1zM1211,849h1v1h-1zM1212,849h1v1h-1zM1213,849h1v1h-1zM1214,849h1v1h-1zM1215,849h1v1h-1zM1216,849h1v1h-1zM1219,849h1v1h-1zM1209,850h1v1h-1zM1210,850h1v1h-1zM1211,850h1v1h-1zM1212,850h1v1h-1zM1213,850h1v1h-1zM1214,850h1v1h-1zM1215,850h1v1h-1zM1216,850h1v1h-1zM1217,850h1v1h-1zM1218,850h1v1h-1zM1219,850h1v1h-1zM1209,851h1v1h-1zM1212,851h1v1h-1zM1213,851h1v1h-1zM1214,851h1v1h-1zM1215,851h1v1h-1zM1216,851h1v1h-1zM1217,851h1v1h-1zM1218,851h1v1h-1zM1219,851h1v1h-1zM1213,852h1v1h-1zM1214,852h1v1h-1zM1215,852h1v1h-1zM1216,852h1v1h-1zM1217,852h1v1h-1zM1218,852h1v1h-1zM1219,852h1v1h-1zM1214,853h1v1h-1zM1215,853h1v1h-1zM1216,853h1v1h-1zM1217,853h1v1h-1zM1218,853h1v1h-1zM1219,853h1v1h-1zM1214,854h1v1h-1zM1215,854h1v1h-1zM1216,854h1v1h-1zM1217,854h1v1h-1zM1218,854h1v1h-1zM1219,854h1v1h-1zM1213,855h1v1h-1zM1214,855h1v1h-1zM1215,855h1v1h-1zM1216,855h1v1h-1zM1217,855h1v1h-1zM1218,855h1v1h-1zM1219,855h1v1h-1z" fill="#000" shape-rendering="crispEdges"/><path d="M878,171h1v1h-1zM877,172h1v1h-1zM878,172h1v1h-1zM879,172h1v1h-1zM876,173h1v1h-1zM877,173h1v1h-1zM878,173h1v1h-1zM879,173h1v1h-1zM880,173h1v1h-1zM875,174h1v1h-1zM876,174h1v1h-1zM877,174h1v1h-1zM878,174h1v1h-1zM879,174h1v1h-1zM880,174h1v1h-1zM881,174h1v1h-1zM874,175h1v1h-1zM875,175h1v1h-1zM876,175h1v1h-1zM877,175h1v1h-1zM878,175h1v1h-1zM879,175h1v1h-1zM880,175h1v1h-1zM881,175h1v1h-1zM882,175h1v1h-1zM876,176h1v1h-1zM877,176h1v1h-1zM878,176h1v1h-1zM879,176h1v1h-1zM880,176h1v1h-1zM876,177h1v1h-1zM877,177h1v1h-1zM878,177h1v1h-1zM879,177h1v1h-1zM880,177h1v1h-1zM876,178h1v1h-1zM877,178h1v1h-1zM878,178h1v1h-1zM879,178h1v1h-1zM880,178h1v1h-1zM874,179h1v1h-1zM875,179h1v1h-1zM876,179h1v1h-1zM877,179h1v1h-1zM878,179h1v1h-1zM879,179h1v1h-1zM880,179h1v1h-1zM881,179h1v1h-1zM882,179h1v1h-1zM875,180h1v1h-1zM876,180h1v1h-1zM877,180h1v1h-1zM878,180h1v1h-1zM879,180h1v1h-1zM880,180h1v1h-1zM881,180h1v1h-1zM876,181h1v1h-1zM877,181h1v1h-1zM878,181h1v1h-1zM879,181h1v1h-1zM880,181h1v1h-1zM877,182h1v1h-1zM878,182h1v1h-1zM879,182h1v1h-1zM878,183h1v1h-1z" fill="#000" shape-rendering="crispEdges"/><path d="M878,844h1v1h-1zM877,845h1v1h-1zM878,845h1v1h-1zM879,845h1v1h-1zM876,846h1v1h-1zM877,846h1v1h-1zM878,846h1v1h-1zM879,846h1v1h-1zM880,846h1v1h-1zM875,847h1v1h-1zM876,847h1v1h-1zM877,847h1v1h-1zM878,847h1v1h-1zM879,847h1v1h-1zM880,847h1v1h-1zM881,847h1v1h-1zM874,848h1v1h-1zM875,848h1v1h-1zM876,848h1v1h-1zM877,848h1v1h-1zM878,848h1v1h-1zM879,848h1v1h-1zM880,848h1v1h-1zM881,848h1v1h-1zM882,848h1v1h-1zM876,849h1v1h-1zM877,849h1v1h-1zM878,849h1v1h-1zM879,849h1v1h-1zM880,849h1v1h-1zM876,850h1v1h-1zM877,850h1v1h-1zM878,850h1v1h-1zM879,850h1v1h-1zM880,850h1v1h-1zM876,851h1v1h-1zM877,851h1v1h-1zM878,851h1v1h-1zM879,851h1v1h-1zM880,851h1v1h-1zM874,852h1v1h-1zM875,852h1v1h-1zM876,852h1v1h-1zM877,852h1v1h-1zM878,852h1v1h-1zM879,852h1v1h-1zM880,852h1v1h-1zM881,852h1v1h-1zM882,852h1v1h-1zM875,853h1v1h-1zM876,853h1v1h-1zM877,853h1v1h-1zM878,853h1v1h-1zM879,853h1v1h-1zM880,853h1v1h-1zM881,853h1v1h-1zM876,854h1v1h-1zM877,854h1v1h-1zM878,854h1v1h-1zM879,854h1v1h-1zM880,854h1v1h-1zM877,855h1v1h-1zM878,855h1v1h-1zM879,855h1v1h-1zM878,856h1v1h-1z" fill="#000" shape-rendering="crispEdges"/><path d="M535,514h1v1h-1zM536,513h1v1h-1zM536,514h1v1h-1zM536,515h1v1h-1zM537,512h1v1h-1zM537,513h1v1h-1zM537,514h1v1h-1zM537,515h1v1h-1zM537,516h1v1h-1zM538,511h1v1h-1zM538,512h1v1h-1zM538,513h1v1h-1zM538,514h1v1h-1zM538,515h1v1h-1zM538,516h1v1h-1zM538,517h1v1h-1zM539,510h1v1h-1zM539,511h1v1h-1zM539,512h1v1h-1zM539,513h1v1h-1zM539,514h1v1h-1zM539,515h1v1h-1zM539,516h1v1h-1zM539,517h1v1h-1zM539,518h1v1h-1zM540,512h1v1h-1zM540,513h1v1h-1zM540,514h1v1h-1zM540,515h1v1h-1zM540,516h1v1h-1zM541,512h1v1h-1zM541,513h1v1h-1zM541,514h1v1h-1zM541,515h1v1h-1zM541,516h1v1h-1zM542,512h1v1h-1zM542,513h1v1h-1zM542,514h1v1h-1zM542,515h1v1h-1zM542,516h1v1h-1zM543,510h1v1h-1zM543,511h1v1h-1zM543,512h1v1h-1zM543,513h1v1h-1zM543,514h1v1h-1zM543,515h1v1h-1zM543,516h1v1h-1zM543,517h1v1h-1zM543,518h1v1h-1zM544,511h1v1h-1zM544,512h1v1h-1zM544,513h1v1h-1zM544,514h1v1h-1zM544,515h1v1h-1zM544,516h1v1h-1zM544,517h1v1h-1zM545,512h1v1h-1zM545,513h1v1h-1zM545,514h1v1h-1zM545,515h1v1h-1zM545,516h1v1h-1zM546,513h1v1h-1zM546,514h1v1h-1zM546,515h1v1h-1zM547,514h1v1h-1z" fill="#000" shape-rendering="crispEdges"/><path d="M1208,514h1v1h-1zM1209,513h1v1h-1zM1209,514h1v1h-1zM1209,515h1v1h-1zM1210,512h1v1h-1zM1210,513h1v1h-1zM1210,514h1v1h-1zM1210,515h1v1h-1zM1210,516h1v1h-1zM1211,511h1v1h-1zM1211,512h1v1h-1zM1211,513h1v1h-1zM1211,514h1v1h-1zM1211,515h1v1h-1zM1211,516h1v1h-1zM1211,517h1v1h-1zM1212,510h1v1h-1zM1212,511h1v1h-1zM1212,512h1v1h-1zM1212,513h1v1h-1zM1212,514h1v1h-1zM1212,515h1v1h-1zM1212,516h1v1h-1zM1212,517h1v1h-1zM1212,518h1v1h-1zM1213,512h1v1h-1zM1213,513h1v1h-1zM1213,514h1v1h-1zM1213,515h1v1h-1zM1213,516h1v1h-1zM1214,512h1v1h-1zM1214,513h1v1h-1zM1214,514h1v1h-1zM1214,515h1v1h-1zM1214,516h1v1h-1zM1215,512h1v1h-1zM1215,513h1v1h-1zM1215,514h1v1h-1zM1215,515h1v1h-1zM1215,516h1v1h-1zM1216,510h1v1h-1zM1216,511h1v1h-1zM1216,512h1v1h-1zM1216,513h1v1h-1zM1216,514h1v1h-1zM1216,515h1v1h-1zM1216,516h1v1h-1zM1216,517h1v1h-1zM1216,518h1v1h-1zM1217,511h1v1h-1zM1217,512h1v1h-1zM1217,513h1v1h-1zM1217,514h1v1h-1zM1217,515h1v1h-1zM1217,516h1v1h-1zM1217,517h1v1h-1zM1218,512h1v1h-1zM1218,513h1v1h-1zM1218,514h1v1h-1zM1218,515h1v1h-1zM1218,516h1v1h-1zM1219,513h1v1h-1zM1219,514h1v1h-1zM1219,515h1v1h-1zM1220,514h1v1h-1z" fill="#000" shape-rendering="crispEdges"/></g></svg><div style="position:absolute;left:0px;top:83px;width:34px;height:890px;background:#f3f4f6"></div><div style="position:absolute;left:2px;top:86px;width:31px;height:30px;background:#b9d7f6;border:1px solid #6aaae8"></div><svg style="left:5px;top:88px" width="24" height="24" viewBox="0 0 24 24"><path d="M7 2 L7 19 L11 15 L14 22 L17 20.5 L14 14 L19.5 14 Z" fill="#000" stroke="#fff" stroke-width="0.8"/></svg><svg style="left:5px;top:118px" width="24" height="24" viewBox="0 0 24 24"><path d="M2.7 22 C2.7 14 3 9 8 6.5 C11 4.5 16 3.5 21.3 3.3" fill="none" stroke="#555" stroke-width="1"/><rect x="0.8" y="20.2" width="4" height="4" fill="#ccf" stroke="#66f" stroke-width="1"/><rect x="19.3" y="1.4" width="4" height="4" fill="#ccf" stroke="#66f" stroke-width="1"/><rect x="3.7" y="4.7" width="6" height="6" fill="#99e" stroke="#00f" stroke-width="1.5"/><path d="M9 10 L21 18.5 L16 23.5 Z" fill="#000"/></svg><svg style="left:5px;top:148px" width="24" height="24" viewBox="0 0 24 24"><defs><linearGradient id="tw" x1="0" y1="0" x2="0" y2="1"><stop offset="0" stop-color="#555"/><stop offset="1" stop-color="#ccc"/></linearGradient></defs><path d="M2 15 C6 13 8 4 14 3 C19 2 21 7 18 9 C16 10 15 8 16 7 C13 7 13 12 18 15 L21 15 L21 22 L2 22 Z" fill="url(#tw)" stroke="#333" stroke-width="0.8"/></svg><svg style="left:5px;top:178px" width="24" height="24" viewBox="0 0 24 24"><circle cx="9" cy="9" r="7" fill="#dbe8f5" stroke="#222" stroke-width="1.6"/><path d="M14 14 L21 21" stroke="#222" stroke-width="4" stroke-linecap="round"/><path d="M15 15 L20.5 20.5" stroke="#f0b020" stroke-width="2.4" stroke-linecap="round"/></svg><svg style="left:5px;top:208px" width="24" height="24" viewBox="0 0 24 24"><defs><linearGradient id="rg" x1="0" y1="0" x2="1" y2="1"><stop offset="0" stop-color="#f4f8fc"/><stop offset="1" stop-color="#8daed0"/></linearGradient></defs><rect x="3" y="3" width="18" height="18" fill="url(#rg)" stroke="#111" stroke-width="1.3"/></svg><svg style="left:5px;top:238px" width="24" height="24" viewBox="0 0 24 24"><defs><linearGradient id="b3l" x1="0" y1="0" x2="1" y2="1"><stop offset="0" stop-color="#9a9ad8"/><stop offset="1" stop-color="#6a6ab8"/></linearGradient><linearGradient id="b3r" x1="0" y1="0" x2="1" y2="0"><stop offset="0" stop-color="#c8c8ee"/><stop offset="1" stop-color="#ededfb"/></linearGradient></defs><path d="M2 4.5 L13 0.7 L22.5 8.5 L21 19.5 L11 24 L2 17.5 Z" fill="url(#b3l)" stroke="#444" stroke-width="1"/><path d="M13 0.7 L22.5 8.5 L21 19.5 L16 14 L15 3 Z" fill="url(#b3r)"/><path d="M2 17.5 L16 14 L21 19.5 L11 24 Z" fill="#3c3c88"/></svg><svg style="left:5px;top:269px" width="24" height="24" viewBox="0 0 24 24"><defs><radialGradient id="eg" cx="0.35" cy="0.25" r="0.85"><stop offset="0" stop-color="#fff"/><stop offset="1" stop-color="#ff8f9c"/></radialGradient></defs><circle cx="12" cy="11.5" r="9.6" fill="url(#eg)" stroke="#111" stroke-width="1.1"/></svg><svg style="left:5px;top:299px" width="24" height="24" viewBox="0 0 24 24"><defs><linearGradient id="sg" x1="0" y1="0" x2="0" y2="1"><stop offset="0" stop-color="#fffbe0"/><stop offset="1" stop-color="#f0d860"/></linearGradient></defs><path d="M1 6.5 L7.5 1.3 L14.5 5 L13 13 L3.5 15 Z" fill="url(#sg)" stroke="#222" stroke-width="0.9"/><path d="M15.5 5.8 L18 11 L23.5 11.3 L19.2 14.6 L21 20.5 L15.5 17.3 L10 20.8 L11.8 14.8 L7.5 11.3 L13.2 11 Z" fill="url(#sg)" stroke="#222" stroke-width="0.9"/></svg><svg style="left:5px;top:329px" width="24" height="24" viewBox="0 0 24 24"><path d="M12 13 C13.5 12.5 13.5 10.5 12 10.3 C9.5 10 8.8 13.8 11.2 15 C14.5 16.5 17 13 16.2 10 C15 5.5 8.5 5.5 6.5 10 C4.5 14.5 7.5 19.5 12 19.8 C17.5 20 21 16 20.5 10.5 C20 5 15 1.5 10 2 C4.5 2.5 1 7 1 12 C1 18 6 22.5 12 22.5 C17 22.5 21 20 22 21" fill="none" stroke="#111" stroke-width="1.1"/></svg><svg style="left:5px;top:359px" width="24" height="24" viewBox="0 0 24 24"><defs><linearGradient id="pg" x1="0" y1="0" x2="1" y2="0.3"><stop offset="0" stop-color="#fff080"/><stop offset="1" stop-color="#f09010"/></linearGradient></defs><path d="M1.5 1.8 H5.5 L1.5 8.5 C2.5 11.5 7 11 7.5 15 C8 21 13 22.5 17 21.5 C19.5 21 21 19.5 21.5 18" fill="none" stroke="#111" stroke-width="1.2"/><path d="M12.8 20 L11 13 L17 1.5 L23.5 5 L18.5 15.5 Z" fill="url(#pg)" stroke="#333" stroke-width="0.8"/><path d="M12.8 20 L11 13 C13 14.5 16 15.5 18.5 15.5 Z" fill="#fdf3dc" stroke="#333" stroke-width="0.7"/><path d="M12.8 20 L12.2 17.3 L14.3 18 Z" fill="#111"/></svg><svg style="left:5px;top:389px" width="24" height="24" viewBox="0 0 24 24"><defs><linearGradient id="nb" x1="0" y1="0" x2="1" y2="0"><stop offset="0" stop-color="#bfe0f0"/><stop offset="1" stop-color="#4a88b8"/></linearGradient></defs><path d="M1.5 1 H14.5" stroke="#111" stroke-width="1"/><path d="M5 1.5 C9 5 12 10 9 16 C8 18.5 6 20.5 4 21.5" fill="none" stroke="#111" stroke-width="1"/><path d="M4.5 21.5 H11" stroke="#111" stroke-width="1"/><rect x="0.8" y="19.8" width="3.8" height="3.5" fill="#fff" stroke="#111" stroke-width="1"/><rect x="10.8" y="20.5" width="2" height="2" fill="#fff" stroke="#111" stroke-width="0.8"/><path d="M15 12 L18.5 1.5 L24 4 L19.5 14 Z" fill="url(#nb)" stroke="#335" stroke-width="0.8"/><path d="M14.5 11.5 L20 14.5 L19 16 L14 13.5 Z" fill="#f5d050" stroke="#333" stroke-width="0.6"/><path d="M15 14 L12.5 19 L17.5 15.5" fill="#ddd" stroke="#333" stroke-width="0.7"/></svg><svg style="left:5px;top:419px" width="24" height="24" viewBox="0 0 24 24"><defs><linearGradient id="cg" x1="0" y1="0" x2="1" y2="1"><stop offset="0" stop-color="#fff4b0"/><stop offset="1" stop-color="#e8a800"/></linearGradient></defs><path d="M3.5 1 C7.5 0 10 1 9 4 C7.5 8 7 14 10 18 C12.5 21 17 19.5 21 18.5 C23 18 23.5 19.5 22.5 20 C18 22.5 12 23 8 20.5 C3 17 3 9 5.5 4.5 C6 3.5 5 2.5 3.5 1 Z" fill="#111"/><path d="M11.5 19 L13 10 L17 5.5 L22 9.5 L19 13.5 Z" fill="url(#cg)" stroke="#222" stroke-width="0.9"/><path d="M12 18 L15.5 12" stroke="#222" stroke-width="0.9"/><path d="M15.5 2 L20 0.5 L23.5 3.5 L21.5 8.5 L16 5 Z" fill="#5a9ac8" stroke="#224" stroke-width="0.7"/><path d="M16.5 5.5 L22 9" stroke="#e02020" stroke-width="2"/></svg><svg style="left:5px;top:449px" width="24" height="24" viewBox="0 0 24 24"><defs><linearGradient id="ag" x1="0" y1="0" x2="1" y2="1"><stop offset="0" stop-color="#555"/><stop offset="1" stop-color="#000"/></linearGradient></defs><path d="M1 21.3 L8 2 H13.8 L20.5 21.3 H15.5 L14.2 17.3 H7.3 L6 21.3 Z M8.6 13.3 H12.9 L10.8 6.8 Z" fill="url(#ag)" stroke="#111" stroke-width="0.6"/><path d="M21.5 1.2 V22.5 M19.5 1.2 H23.5 M19.5 22.5 H23.5" stroke="#222" stroke-width="0.9"/></svg><svg style="left:5px;top:479px" width="24" height="24" viewBox="0 0 24 24"><defs><linearGradient id="spg" x1="0" y1="0" x2="1" y2="0"><stop offset="0" stop-color="#9ee070"/><stop offset="1" stop-color="#2e8a10"/></linearGradient></defs><path d="M11.5 10 L19 7.5 L23.5 20.5 C22 23 17 24 15 22.5 Z" fill="url(#spg)" stroke="#1e4a0e" stroke-width="0.9"/><path d="M11 9.5 L18.5 7 L18 4.5 C17 2.5 13 3 12 5 Z" fill="#fff" stroke="#333" stroke-width="0.9"/><path d="M11.5 8 L18.5 6" stroke="#e0b020" stroke-width="1.5"/><g fill="#111"><circle cx="3" cy="2" r="0.9"/><circle cx="6" cy="1.5" r="0.9"/><circle cx="1.5" cy="5.5" r="0.9"/><circle cx="4.5" cy="5" r="0.7"/><circle cx="8" cy="4.5" r="0.7"/><circle cx="2.5" cy="9" r="0.9"/><circle cx="6" cy="8" r="0.7"/><circle cx="9" cy="7" r="0.6"/></g></svg><svg style="left:5px;top:508px" width="24" height="24" viewBox="0 0 24 24"><defs><linearGradient id="erg" x1="0" y1="0" x2="1" y2="1"><stop offset="0" stop-color="#fff2ee"/><stop offset="1" stop-color="#f0a890"/></linearGradient></defs><path d="M2 17.5 L12.5 1.5 L21.5 7 L11 23 Z" fill="url(#erg)" stroke="#222" stroke-width="1.1"/></svg><svg style="left:5px;top:538px" width="24" height="24" viewBox="0 0 24 24"><defs><linearGradient id="bkg" x1="0" y1="0" x2="1" y2="0"><stop offset="0" stop-color="#d0e8f4"/><stop offset="1" stop-color="#3a78b0"/></linearGradient></defs><ellipse cx="10.5" cy="22.5" rx="10.5" ry="2" fill="#a8e0a0" stroke="#2a6a2a" stroke-width="0.8"/><path d="M3.5 9 L16 3.5 L22.5 11 L21 14.5 L11 19 L6.5 17 Z" fill="url(#bkg)" stroke="#1a3050" stroke-width="1"/><ellipse cx="9" cy="11" rx="6" ry="2.8" transform="rotate(-35 9 11)" fill="#6ac070" stroke="#1a3050" stroke-width="0.8"/><path d="M4 11 C2.5 14 3 18 5 22" fill="none" stroke="#5ab860" stroke-width="2.2"/><path d="M6 3 C4 7 9 11 11 10" fill="none" stroke="#333" stroke-width="0.9"/></svg><svg style="left:5px;top:568px" width="24" height="24" viewBox="0 0 24 24"><defs><linearGradient id="gg" x1="0" y1="0" x2="1" y2="1"><stop offset="0" stop-color="#3ea040"/><stop offset="0.5" stop-color="#d8f0d8"/><stop offset="1" stop-color="#3ea040"/></linearGradient></defs><rect x="2" y="2" width="21" height="21" fill="url(#gg)"/><path d="M6 6 L18 18" stroke="#222" stroke-width="1.2"/><rect x="3.5" y="3.5" width="4" height="4" fill="#fff" stroke="#222"/><rect x="16.5" y="16.5" width="4" height="4" fill="#fff" stroke="#222"/></svg><svg style="left:5px;top:598px" width="24" height="24" viewBox="0 0 24 24"><defs><linearGradient id="drg" x1="0" y1="0" x2="1" y2="1"><stop offset="0" stop-color="#e8f0f8"/><stop offset="1" stop-color="#6a90c0"/></linearGradient></defs><path d="M16.5 4 C17.5 1 21.5 0 23 2 C24.5 4 23 7.5 20 8.5 L18.5 10 L14.5 6 Z" fill="#111"/><path d="M15.5 7 L5.5 17 C4.8 17.8 4.8 19 5.5 19.5 C6.2 20 7 19.8 7.7 19.2 L17.5 9 Z" fill="url(#drg)" stroke="#222" stroke-width="0.9"/><path d="M13.5 5.5 L19 11" stroke="#111" stroke-width="1.6"/><path d="M4.5 21.5 C3.5 23 4 24.5 5 24.5 C6 24.5 6.5 23 5.5 21.5 L5 20.5 Z" fill="#4a80c8"/></svg><svg style="left:5px;top:628px" width="24" height="24" viewBox="0 0 24 24"><rect x="6" y="1" width="8" height="6" fill="#bcd4ee" stroke="#333" stroke-width="0.9"/><rect x="10" y="10" width="8" height="5" fill="#f5d040" stroke="#333" stroke-width="0.9"/><rect x="1" y="17" width="8" height="6" fill="#bcd4ee" stroke="#333" stroke-width="0.9"/><rect x="15" y="17" width="8" height="6" fill="#bcd4ee" stroke="#333" stroke-width="0.9"/><path d="M14 4 H19 V17 M5 17 V12 H10" fill="none" stroke="#222" stroke-width="1"/></svg><div style="position:absolute;left:1441px;top:83px;width:27px;height:870px;background:#f0f0f0"></div><div style="position:absolute;left:1441px;top:102px;width:2px;height:851px;background:#f8f8f8"></div><svg style="left:1443px;top:86px" width="18" height="18" viewBox="0 0 18 18"><circle cx="7" cy="7" r="6" fill="#f4f4f4" stroke="#444" stroke-width="1.3"/><text x="2.6" y="9.2" font-size="6" font-family="Liberation Sans" fill="#333">1:1</text><path d="M11.3 11.3 L16.5 16.5" stroke="#222" stroke-width="2.2"/></svg><div style="position:absolute;left:1443px;top:379px;width:15px;height:308px;background:#c8c8c8"></div><svg style="left:1446px;top:111px" width="9" height="6" viewBox="0 0 9 6"><path d="M0.8 5 L4.5 1.2 L8.2 5" fill="none" stroke="#555" stroke-width="2"/></svg><svg style="left:1446px;top:942px" width="9" height="6" viewBox="0 0 9 6"><path d="M0.8 1 L4.5 4.8 L8.2 1" fill="none" stroke="#555" stroke-width="2"/></svg><div style="position:absolute;left:1468px;top:85px;width:390px;height:888px;background:#f0f0f0;border-left:1px solid #111;border-top:1px solid #111"></div><div style="position:absolute;left:1469px;top:86px;width:389px;height:22px;background:#d5d5d5;border-bottom:1px solid #a8a8a8"></div><svg style="left:1474px;top:89px" width="18" height="17" viewBox="0 0 18 17"><rect x="0.5" y="0.5" width="8" height="8" fill="#c9dcf0" stroke="#222"/><path d="M11 2 A6 6 0 1 1 6 15" fill="none" stroke="#e03030" stroke-dasharray="1.2 1.2" stroke-width="1.2"/><path d="M9 1 L12.5 0 L12 4 Z" fill="#e03030"/></svg><div class="t" style="left:1491px;top:90px;">Przekształć... (Shift+Ctrl+M)</div><svg style="left:1818px;top:91px" width="34" height="12" viewBox="0 0 34 12"><rect x="0.5" y="0.5" width="11" height="11" rx="1.5" fill="#e0e0e0" stroke="#777"/><path d="M4 3 L8.5 6 L4 9 Z" fill="#444"/><rect x="21.5" y="0.5" width="11" height="11" rx="1.5" fill="#e0e0e0" stroke="#777"/><path d="M24 3 L30 9 M30 3 L24 9" stroke="#333" stroke-width="1.6"/></svg><div style="position:absolute;left:1474px;top:137px;width:378px;height:84px;background:#fff;border:1px solid #c6c6c6"></div><div style="position:absolute;left:1476px;top:115px;width:51px;height:23px;background:#e9e9e9;border:1px solid #c6c6c6;border-bottom:none"><div class="t" style="left:24px;top:6px;transform:translateX(-50%)"><u>P</u>rzesuń</div></div><div style="position:absolute;left:1527px;top:115px;width:40px;height:23px;background:#e9e9e9;border:1px solid #c6c6c6;border-bottom:none"><div class="t" style="left:19px;top:6px;transform:translateX(-50%)"><u>S</u>kaluj</div></div><div style="position:absolute;left:1612px;top:115px;width:45px;height:23px;background:#e9e9e9;border:1px solid #c6c6c6;border-bottom:none"><div class="t" style="left:21px;top:6px;transform:translateX(-50%)">Po<u>c</u>hyl</div></div><div style="position:absolute;left:1657px;top:115px;width:51px;height:23px;background:#e9e9e9;border:1px solid #c6c6c6;border-bottom:none"><div class="t" style="left:24px;top:6px;transform:translateX(-50%)"><u>M</u>acierz</div></div><div style="position:absolute;left:1566px;top:113px;width:47px;height:26px;background:#fff;border:1px solid #c6c6c6;border-bottom:none;z-index:2"><div class="t" style="left:22px;top:7px;transform:translateX(-50%)"><u>O</u>bróć</div></div><svg style="left:1478px;top:145px" width="24" height="22" viewBox="0 0 24 22"><rect x="6" y="5" width="11" height="14" transform="rotate(45 11.5 12)" fill="#c5d9ee" stroke="#222" stroke-width="1"/><path d="M5 2 H2 V7 M0.5 5.5 L2 7.5 L3.5 5.5" fill="none" stroke="#222" stroke-width="1"/><path d="M18 21 H21 V15 M19.5 16.5 L21 14.5 L22.5 16.5" fill="none" stroke="#222" stroke-width="1"/></svg><div class="t" style="left:1508px;top:147px;"><u>K</u>ąt</div><div style="position:absolute;left:1537px;top:142px;width:57px;height:23px;background:#fff;border:1px solid #acacac;"><div class="t" style="left:4px;top:3px">40,000</div></div><div style="position:absolute;left:1594px;top:143px;width:11px;height:21px;background:#f0f0f0;border:1px solid #d0d0d0"></div><svg style="left:1596px;top:146px" width="7" height="15" viewBox="0 0 7 15"><path d="M0.5 4 L3.5 0.5 L6.5 4 Z" fill="#222"/><path d="M0.5 11 L3.5 14.5 L6.5 11 Z" fill="#222"/><rect x="0" y="7.0" width="7" height="1" fill="#bbb"/></svg><div style="position:absolute;left:1613px;top:143px;width:51px;height:22px;background:#fff;border:1px solid #acacac"><div class="t" style="left:3px;top:3px">deg</div></div><div style="position:absolute;left:1646px;top:144px;width:17px;height:20px;background:#dcdcdc;border-left:1px solid #acacac"></div><svg style="left:1651px;top:151px" width="8" height="6" viewBox="0 0 8 6"><path d="M0.5 0.8 L4 4.5 L7.5 0.8" fill="none" stroke="#555" stroke-width="1.4"/></svg><div style="position:absolute;left:1476px;top:226px;width:13px;height:13px;background:#fff;border:1px solid #333"></div><div class="t" style="left:1495px;top:225px;">Zastosuj osob<u>n</u>o dla każdego obiektu</div><div style="position:absolute;left:1673px;top:247px;width:83px;height:25px;background:linear-gradient(#f2f2f2,#e5e5e5);border:1px solid #acacac"><div class="t" style="left:0;width:81px;text-align:center;top:4px">Wy<u>c</u>zyść</div></div><div style="position:absolute;left:1764px;top:247px;width:83px;height:25px;background:linear-gradient(#f2f2f2,#e5e5e5);border:1px solid #acacac"><div class="t" style="left:0;width:81px;text-align:center;top:4px"><u>Z</u>astosuj</div></div><div style="position:absolute;left:1469px;top:281px;width:389px;height:1px;background:#fff"></div><div style="position:absolute;left:1469px;top:287px;width:389px;height:23px;background:#d5d5d5;border-bottom:1px solid #a8a8a8"></div><svg style="left:1474px;top:290px" width="16" height="16" viewBox="0 0 16 16"><defs><linearGradient id="fsg" x1="0" y1="0" x2="1" y2="1"><stop offset="0" stop-color="#111"/><stop offset="1" stop-color="#777"/></linearGradient></defs><path d="M0 0 H15.5 L0.5 15.5 Z M2 2 V12 L12 2 Z" fill="#111" fill-rule="evenodd"/><path d="M2 2 H12 L2 12 Z" fill="#fff"/><path d="M0.5 16 L11 5 L15 1.5 L13.5 6 L3 15 Z" fill="url(#fsg)"/><path d="M12.5 3 L15.5 0.8 L14.3 5 Z" fill="#f5b000"/></svg><div class="t" style="left:1491px;top:291px;">Wypełnienie i kontur... (Shift+Ctrl+F)</div><svg style="left:1818px;top:292px" width="34" height="12" viewBox="0 0 34 12"><rect x="0.5" y="0.5" width="11" height="11" rx="1.5" fill="#e0e0e0" stroke="#777"/><path d="M4 3 L8.5 6 L4 9 Z" fill="#444"/><rect x="21.5" y="0.5" width="11" height="11" rx="1.5" fill="#e0e0e0" stroke="#777"/><path d="M24 3 L30 9 M30 3 L24 9" stroke="#333" stroke-width="1.6"/></svg><div style="position:absolute;left:1474px;top:340px;width:378px;height:281px;background:#fff;border:1px solid #c6c6c6"></div><div style="position:absolute;left:1568px;top:316px;width:61px;height:25px;background:#e9e9e9;border:1px solid #c6c6c6;border-bottom:none"><div style="position:absolute;left:2px;top:3px;width:16px;height:16px;background:linear-gradient(135deg,#fff,#ddd);border:1px solid #999"></div><div class="t" style="left:21px;top:5px"><u>K</u>ontur</div></div><div style="position:absolute;left:1629px;top:316px;width:90px;height:25px;background:#e9e9e9;border:1px solid #c6c6c6;border-bottom:none"><svg style="left:1px;top:4px" width="18" height="16" viewBox="0 0 18 16"><path d="M1 4 H14 M1 8 H14 M1 12 H14" stroke="#222" stroke-width="1.3" stroke-dasharray="2.5 1"/><path d="M12 1 L16 4 L12 7 Z" fill="#222"/></svg><div class="t" style="left:19px;top:5px"><u>S</u>tyl konturu</div></div><div style="position:absolute;left:1474px;top:314px;width:95px;height:28px;background:#fff;border:1px solid #c6c6c6;border-bottom:none;z-index:2"><div style="position:absolute;left:4px;top:6px;width:16px;height:16px;background:linear-gradient(135deg,#a9c3e0,#fff)"></div><div class="t" style="left:23px;top:6px">Wypełnienie</div></div><svg style="left:1490px;top:356px" width="13" height="13" viewBox="0 0 13 13"><path d="M1.5 1.5 L11.5 11.5 M11.5 1.5 L1.5 11.5" stroke="#111" stroke-width="2.4"/></svg><div style="position:absolute;left:1512px;top:348px;width:30px;height:30px;background:#bad8f7;border:1px solid #6aaae8"></div><svg style="left:1517px;top:353px" width="20" height="20" viewBox="0 0 20 20"><rect x="1" y="1" width="18" height="18" fill="#8eacd0" stroke="#111" stroke-width="1.3"/></svg><svg style="left:1547px;top:353px" width="20" height="20" viewBox="0 0 20 20"><defs><linearGradient id="lg1" x1="0" y1="0" x2="1" y2="0"><stop offset="0" stop-color="#8eacd0"/><stop offset="1" stop-color="#fff"/></linearGradient></defs><rect x="1" y="1" width="18" height="18" fill="url(#lg1)" stroke="#111" stroke-width="1.3"/></svg><svg style="left:1577px;top:353px" width="20" height="20" viewBox="0 0 20 20"><defs><radialGradient id="rg1"><stop offset="0" stop-color="#fff"/><stop offset="1" stop-color="#8eacd0"/></radialGradient></defs><rect x="1" y="1" width="18" height="18" fill="url(#rg1)" stroke="#111" stroke-width="1.3"/></svg><svg style="left:1607px;top:353px" width="20" height="20" viewBox="0 0 20 20"><defs><pattern id="pt1" width="6" height="6" patternUnits="userSpaceOnUse"><rect width="6" height="6" fill="#a7c0de"/><circle cx="3" cy="3" r="2.2" fill="#fff"/></pattern></defs><rect x="1" y="1" width="18" height="18" fill="url(#pt1)" stroke="#111" stroke-width="1.3"/></svg><svg style="left:1637px;top:353px" width="20" height="20" viewBox="0 0 20 20"><rect x="1" y="1" width="18" height="18" fill="#8eacd0" stroke="#111" stroke-width="1.3"/><rect x="3.5" y="3.5" width="13" height="13" fill="#fff"/></svg><div class="t" style="left:1668px;top:350px;font-size:23px;line-height:24px;font-weight:bold">?</div><svg style="left:1797px;top:355px" width="16" height="17" viewBox="0 0 16 17"><path d="M8 16 C2 14 0 9 1 4 C2 1 5 1 5 3 C4 6 6 10 8 10 C10 10 12 6 11 3 C11 1 14 1 15 4 C16 9 14 14 8 16 Z M8 13 C6 13 4 10 4 7 C6 8 10 8 12 7 C12 10 10 13 8 13 Z" fill="#111" fill-rule="evenodd"/></svg><div style="position:absolute;left:1818px;top:348px;width:26px;height:30px;background:#bad8f7;border:1px solid #6aaae8"></div><svg style="left:1823px;top:354px" width="16" height="17" viewBox="0 0 16 17"><path d="M8 16 C2 14 0 9 1 4 C2 0 5 0 6 3 C7 5 9 5 10 3 C11 0 14 0 15 4 C16 9 14 14 8 16 Z" fill="#111"/></svg><div style="position:absolute;left:1479px;top:390px;width:368px;height:226px;border:1px solid #d0d0d0"></div><div class="t" style="left:1481px;top:383px;background:#fff;padding:0 2px">Jednolity kolor</div><div style="position:absolute;left:1485px;top:422px;width:357px;height:169px;background:#fff;border:1px solid #c6c6c6"></div><div style="position:absolute;left:1487px;top:400px;width:31px;height:23px;background:#e9e9e9;border:1px solid #c6c6c6;border-bottom:none"><div class="t" style="left:0;width:29px;text-align:center;top:5px">RGB</div></div><div style="position:absolute;left:1518px;top:400px;width:31px;height:23px;background:#e9e9e9;border:1px solid #c6c6c6;border-bottom:none"><div class="t" style="left:0;width:29px;text-align:center;top:5px">HSL</div></div><div style="position:absolute;left:1549px;top:400px;width:42px;height:23px;background:#e9e9e9;border:1px solid #c6c6c6;border-bottom:none"><div class="t" style="left:0;width:40px;text-align:center;top:5px">CMYK</div></div><div style="position:absolute;left:1628px;top:400px;width:33px;height:23px;background:#e9e9e9;border:1px solid #c6c6c6;border-bottom:none"><div class="t" style="left:0;width:31px;text-align:center;top:5px">CMS</div></div><div style="position:absolute;left:1590px;top:398px;width:38px;height:25px;background:#fff;border:1px solid #c6c6c6;border-bottom:none;z-index:2"><div class="t" style="left:0;width:36px;text-align:center;top:5px">Koło</div></div><div style="position:absolute;left:1490px;top:426px;width:346px;height:137px;background:#efefef"></div><div style="position:absolute;left:1490.5px;top:426px;width:136px;height:136px;border-radius:50%;background:conic-gradient(from 90deg, #f00, #f0f 60deg, #00f 120deg, #0ff 180deg, #0f0 240deg, #ff0 300deg, #f00 360deg);-webkit-mask:radial-gradient(circle, transparent 50.5px, #000 51.5px, #000 67.5px, transparent 68.5px);mask:radial-gradient(circle, transparent 50.5px, #000 51.5px, #000 67.5px, transparent 68.5px)"></div><svg style="left:1490px;top:426px" width="136" height="136" viewBox="1490 426 136 136"><defs><linearGradient id="tgw" gradientUnits="userSpaceOnUse" x1="1509.3" y1="494" x2="1583" y2="494"><stop offset="0" stop-color="#fff"/><stop offset="1" stop-color="#000"/></linearGradient><linearGradient id="tgh" gradientUnits="userSpaceOnUse" x1="1583" y1="537" x2="1546" y2="472.4"><stop offset="0" stop-color="#f0f"/><stop offset="1" stop-color="#000"/></linearGradient></defs><g style="isolation:isolate"><path d="M1583 450.8 L1509.3 494 L1583 537 Z" fill="url(#tgh)"/><path d="M1583 450.8 L1509.3 494 L1583 537 Z" fill="url(#tgw)" style="mix-blend-mode:plus-lighter"/></g><circle cx="1582.5" cy="494" r="3.2" fill="none" stroke="#fff" stroke-width="1.5"/><path d="M1584 538 L1591 550" stroke="#fff" stroke-width="1.2"/></svg><div class="t" style="left:1491px;top:571px;"><u>A</u></div><div style="position:absolute;left:1506px;top:566px;width:271px;height:20px;border-top:2px solid #111;border-left:2px solid #111;background:linear-gradient(to right, rgba(128,0,128,0), #800080),conic-gradient(#5a5a5a 25%, #9a9a9a 0 50%, #5a5a5a 0 75%, #9a9a9a 0) 0 0/16px 16px"></div><svg style="left:1769px;top:566px" width="8" height="20" viewBox="0 0 8 20"><path d="M1 0 H8 V7 Z" fill="#111"/><path d="M1 20 H8 V13 Z" fill="#111"/></svg><div style="position:absolute;left:1786px;top:566px;width:39px;height:22px;background:#fff;border:1px solid #acacac;"><div class="t" style="left:4px;top:3px">255</div></div><div style="position:absolute;left:1825px;top:567px;width:11px;height:20px;background:#f0f0f0;border:1px solid #d0d0d0"></div><svg style="left:1827px;top:570px" width="7" height="14" viewBox="0 0 7 14"><path d="M0.5 4 L3.5 0.5 L6.5 4 Z" fill="#222"/><path d="M0.5 10 L3.5 13.5 L6.5 10 Z" fill="#222"/><rect x="0" y="6.5" width="7" height="1" fill="#bbb"/></svg><svg style="left:1486px;top:595px" width="17" height="17" viewBox="0 0 17 17"><defs><pattern id="dith" width="2" height="2" patternUnits="userSpaceOnUse"><rect width="1" height="1" fill="#fff"/><rect x="1" y="1" width="1" height="1" fill="#fff"/></pattern><linearGradient id="tgc" x1="0" y1="0" x2="1" y2="1"><stop offset="0" stop-color="#2a2"/><stop offset="0.5" stop-color="#29a"/><stop offset="1" stop-color="#a2a"/></linearGradient></defs><rect width="17" height="17" fill="#bbb"/><path d="M1 2 L15 9 L4 16 Z" fill="url(#tgc)"/><rect width="17" height="17" fill="url(#dith)" opacity="0.6"/></svg><svg style="left:1506px;top:593px" width="17" height="20" viewBox="0 0 17 20"><rect width="17" height="20" fill="#eee"/><circle cx="8.5" cy="10" r="6.5" fill="none" stroke="#a01818" stroke-width="3.5"/><rect width="17" height="20" fill="url(#dith)" opacity="0.35"/></svg><div class="t" style="left:1700px;width:84px;top:597px;text-align:right;letter-spacing:-0.3px">RGBA<u>:</u></div><div style="position:absolute;left:1786px;top:595px;width:55px;height:20px;background:#fff;border:1px solid #acacac;"><div class="t" style="left:4px;top:2px">800080ff</div></div><div class="t" style="left:1478px;top:624px;"><u>R</u>ozmycie</div><div style="position:absolute;left:1480px;top:649px;width:320px;height:2px;background:#dadada"></div><div style="position:absolute;left:1480px;top:642px;width:11px;height:16px;background:#ececec;border:1px solid #aaa"></div><div style="position:absolute;left:1802px;top:638px;width:39px;height:22px;background:#fff;border:1px solid #acacac;"><div class="t" style="left:4px;top:3px">0,0</div></div><div style="position:absolute;left:1840px;top:639px;width:11px;height:20px;background:#f0f0f0;border:1px solid #d0d0d0"></div><svg style="left:1842px;top:642px" width="7" height="14" viewBox="0 0 7 14"><path d="M0.5 4 L3.5 0.5 L6.5 4 Z" fill="#222"/><path d="M0.5 10 L3.5 13.5 L6.5 10 Z" fill="#222"/><rect x="0" y="6.5" width="7" height="1" fill="#bbb"/></svg><div class="t" style="left:1478px;top:666px;">Krycie, %</div><div style="position:absolute;left:1480px;top:691px;width:320px;height:2px;background:#dadada"></div><div style="position:absolute;left:1785px;top:683px;width:11px;height:17px;background:#ececec;border:1px solid #aaa"></div><div style="position:absolute;left:1802px;top:680px;width:39px;height:22px;background:#fff;border:1px solid #acacac;"><div class="t" style="left:4px;top:3px">100,0</div></div><div style="position:absolute;left:1840px;top:681px;width:11px;height:20px;background:#f0f0f0;border:1px solid #d0d0d0"></div><svg style="left:1842px;top:684px" width="7" height="14" viewBox="0 0 7 14"><path d="M0.5 4 L3.5 0.5 L6.5 4 Z" fill="#222"/><path d="M0.5 10 L3.5 13.5 L6.5 10 Z" fill="#222"/><rect x="0" y="6.5" width="7" height="1" fill="#bbb"/></svg><div style="position:absolute;left:1469px;top:709px;width:389px;height:1px;background:#fff"></div><div style="position:absolute;left:1858px;top:83px;width:62px;height:890px;background:#f3f4f6"></div><div style="position:absolute;left:1858px;top:83px;width:1px;height:890px;background:#fafafa"></div><div style="position:absolute;left:1892px;top:86px;width:26px;height:26px;background:#bad8f7;border:1px solid #6aaae8"></div><div style="position:absolute;left:1892px;top:266px;width:26px;height:26px;background:#bad8f7;border:1px solid #6aaae8"></div><div style="position:absolute;left:1892px;top:370px;width:26px;height:26px;background:#bad8f7;border:1px solid #6aaae8"></div><div style="position:absolute;left:1892px;top:512px;width:26px;height:26px;background:#bad8f7;border:1px solid #6aaae8"></div><div style="position:absolute;left:1892px;top:538px;width:26px;height:26px;background:#bad8f7;border:1px solid #6aaae8"></div><svg style="left:1867px;top:91px" width="16" height="16" viewBox="0 0 16 16"><path d="M2.5 0.5 H10 L14.5 5 V15.5 H2.5 Z" fill="#f7f7f7" stroke="#777"/><path d="M10 0.5 V5 H14.5" fill="#ddd" stroke="#999"/></svg><svg style="left:1867px;top:117px" width="16" height="16" viewBox="0 0 16 16"><path d="M1 3 H6 L7 4.5 H14 V14 H1 Z" fill="#c8c89a" stroke="#776"/><path d="M1 14 L3 7 H15.5 L14 14 Z" fill="#e0e0b8" stroke="#776"/></svg><svg style="left:1867px;top:143px" width="16" height="16" viewBox="0 0 16 16"><rect x="0.5" y="0.5" width="15" height="15" rx="1.5" fill="#3a64b0" stroke="#1c3470"/><rect x="3" y="0.5" width="10" height="5" fill="#fff"/><rect x="3" y="1.8" width="10" height="1.5" fill="#e02020"/><rect x="4" y="9" width="8" height="6.5" fill="#d8d8d8"/><rect x="5" y="10" width="2" height="4" fill="#333"/></svg><svg style="left:1867px;top:169px" width="16" height="16" viewBox="0 0 16 16"><rect x="4" y="0.5" width="8" height="6" fill="#fff" stroke="#777"/><rect x="0.5" y="6" width="15" height="7.5" rx="1.5" fill="#ddd" stroke="#666"/><rect x="3" y="10" width="10" height="1.5" fill="#555"/><rect x="1" y="13.5" width="14" height="2" fill="#aaa"/></svg><div style="position:absolute;left:1867px;top:195px;width:16px;height:1px;background:#b8b8b8"></div><svg style="left:1867px;top:207px" width="16" height="16" viewBox="0 0 16 16"><path d="M4.5 0.5 H11 L15.5 5 V15.5 H4.5 Z" fill="#f7f7f7" stroke="#333"/><path d="M0 8 H9" stroke="#111" stroke-width="1.3"/><path d="M7 5 L10.5 8 L7 11 Z" fill="#111"/></svg><svg style="left:1867px;top:233px" width="16" height="16" viewBox="0 0 16 16"><path d="M1.5 0.5 H8 L12.5 5 V15.5 H1.5 Z" fill="#f7f7f7" stroke="#333"/><path d="M6 8 H15" stroke="#111" stroke-width="1.3"/><path d="M12.5 5 L16 8 L12.5 11 Z" fill="#111"/></svg><div style="position:absolute;left:1867px;top:259px;width:16px;height:1px;background:#b8b8b8"></div><svg style="left:1867px;top:272px" width="16" height="16" viewBox="0 0 16 16"><path d="M6 1 L0.5 6.5 L6 12 V8.5 C10 8.5 12 10 13 14 C16 8 13 4.5 6 4.5 Z" fill="#f3d35a" stroke="#b08a10" stroke-width="0.8"/></svg><svg style="left:1867px;top:298px" width="16" height="16" viewBox="0 0 16 16"><path d="M10 1 L15.5 6.5 L10 12 V8.5 C6 8.5 4 10 3 14 C0 8 3 4.5 10 4.5 Z" fill="#6cc04a" stroke="#3a7a20" stroke-width="0.8"/></svg><div style="position:absolute;left:1867px;top:323px;width:16px;height:1px;background:#b8b8b8"></div><svg style="left:1867px;top:335px" width="16" height="16" viewBox="0 0 16 16"><rect x="0.5" y="0.5" width="10" height="11" fill="#f2f2f2" stroke="#aaa"/><path d="M5.5 4.5 H12 L15.5 8 V15.5 H5.5 Z" fill="#f7f7f7" stroke="#999"/><path d="M7 8 H13 M7 10 H13 M7 12 H13" stroke="#bbb"/></svg><svg style="left:1867px;top:361px" width="16" height="16" viewBox="0 0 16 16"><path d="M3 0 L9 10 M13 0 L7 10" stroke="#999" stroke-width="1.3"/><circle cx="4.5" cy="12.5" r="3" fill="#b07020" stroke="#7a4a10"/><circle cx="11.5" cy="12.5" r="3" fill="#b07020" stroke="#7a4a10"/><circle cx="4.5" cy="12.5" r="1.2" fill="#f3f4f6"/><circle cx="11.5" cy="12.5" r="1.2" fill="#f3f4f6"/></svg><svg style="left:1867px;top:387px" width="16" height="16" viewBox="0 0 16 16"><rect x="1.5" y="2" width="13" height="13.5" rx="1.5" fill="#b9822e" stroke="#6a4414"/><rect x="4" y="4.5" width="8" height="9" fill="#f7f7f7"/><rect x="5" y="0.5" width="6" height="3" fill="#ddd" stroke="#555" stroke-width="0.8"/></svg><div style="position:absolute;left:1867px;top:413px;width:16px;height:1px;background:#b8b8b8"></div><svg style="left:1867px;top:425px" width="16" height="16" viewBox="0 0 16 16"><circle cx="7" cy="7" r="6.3" fill="#c5daef" stroke="#222" stroke-width="1.3"/><rect x="3.5" y="4" width="7" height="6" fill="#fff" stroke="#222" stroke-dasharray="1 1"/><path d="M11.5 11.5 L15 15" stroke="#111" stroke-width="2.4"/></svg><svg style="left:1867px;top:451px" width="16" height="16" viewBox="0 0 16 16"><circle cx="7" cy="7" r="6.3" fill="#c5daef" stroke="#222" stroke-width="1.3"/><rect x="3" y="3" width="5" height="5" fill="#f0c040" stroke="#333" stroke-width="0.8"/><rect x="6" y="6" width="5" height="5" fill="#f0c040" stroke="#333" stroke-width="0.8"/><path d="M11.5 11.5 L15 15" stroke="#111" stroke-width="2.4"/></svg><svg style="left:1867px;top:477px" width="16" height="16" viewBox="0 0 16 16"><circle cx="7" cy="7" r="6.3" fill="#c5daef" stroke="#222" stroke-width="1.3"/><rect x="4.5" y="3" width="5" height="8" fill="#fff" stroke="#333"/><path d="M11.5 11.5 L15 15" stroke="#111" stroke-width="2.4"/></svg><div style="position:absolute;left:1867px;top:503px;width:16px;height:1px;background:#b8b8b8"></div><svg style="left:1867px;top:515px" width="16" height="16" viewBox="0 0 16 16"><rect x="0.5" y="0.5" width="11" height="11" fill="#d5e3f0" stroke="#333"/><rect x="4.5" y="4.5" width="11" height="11" fill="#c5d6ea" stroke="#333"/></svg><svg style="left:1867px;top:541px" width="16" height="16" viewBox="0 0 16 16"><rect x="0.5" y="0.5" width="11" height="11" fill="#d5e3f0" stroke="#333"/><rect x="4.5" y="4.5" width="11" height="11" fill="#c5d6ea" stroke="#333"/><rect x="7" y="9.5" width="6" height="4.5" fill="#f0c030" stroke="#333" stroke-width="0.7"/><path d="M8 9.5 V8 A2 2 0 0 1 12 8 V9.5" fill="none" stroke="#333"/></svg><svg style="left:1867px;top:567px" width="16" height="16" viewBox="0 0 16 16"><rect x="0.5" y="0.5" width="11" height="11" fill="#d5e3f0" stroke="#333"/><rect x="4.5" y="4.5" width="11" height="11" fill="#c5d6ea" stroke="#333"/><rect x="7" y="9.5" width="6" height="4.5" fill="#50a040" stroke="#333" stroke-width="0.7"/><path d="M8 9.5 V8 A2 2 0 0 1 12 6" fill="none" stroke="#333"/></svg><div style="position:absolute;left:1867px;top:593px;width:16px;height:1px;background:#b8b8b8"></div><svg style="left:1867px;top:605px" width="16" height="16" viewBox="0 0 16 16"><rect x="1" y="7" width="8" height="7" fill="#c5d6ea" stroke="#333" stroke-width="0.9"/><circle cx="10.5" cy="6" r="4.5" fill="#c5d6ea" stroke="#333" stroke-width="0.9"/><rect x="0" y="0" width="2" height="2" fill="#111"/><rect x="14" y="0" width="2" height="2" fill="#111"/><rect x="0" y="14" width="2" height="2" fill="#111"/><rect x="14" y="14" width="2" height="2" fill="#111"/></svg><svg style="left:1867px;top:631px" width="16" height="16" viewBox="0 0 16 16"><rect x="1" y="7" width="8" height="7" fill="#f0c040" stroke="#333" stroke-width="0.9"/><circle cx="10.5" cy="6" r="4.5" fill="#c5d6ea" stroke="#333" stroke-width="0.9"/><rect x="0" y="0" width="2" height="2" fill="#111"/><rect x="14" y="0" width="2" height="2" fill="#111"/><rect x="0" y="14" width="2" height="2" fill="#111"/><rect x="14" y="14" width="2" height="2" fill="#111"/></svg><div style="position:absolute;left:1867px;top:657px;width:16px;height:1px;background:#b8b8b8"></div><svg style="left:1867px;top:669px" width="16" height="16" viewBox="0 0 16 16"><rect x="0.5" y="0.5" width="15" height="15" fill="#fff" stroke="#222"/><path d="M0.5 15.5 L11 5 L15.5 1 V5 L11 9 L3 15.5 Z" fill="#111"/><path d="M12 3 L15.5 1 L15 5 Z" fill="#f0a020"/></svg><svg style="left:1867px;top:695px" width="16" height="16" viewBox="0 0 16 16"><path d="M1 1 H15 V5 H14 L13 3 H9.5 V13.5 L11.5 14 V15.5 H4.5 V14 L6.5 13.5 V3 H3 L2 5 H1 Z" fill="#111"/></svg><svg style="left:1867px;top:721px" width="16" height="16" viewBox="0 0 16 16"><path d="M1 5 L5 2 H15 L11 5 Z M1 8.5 L5 5.5 H15 L11 8.5 Z M1 12 L5 9 H15 L11 12 Z" fill="#f4f4f4" stroke="#222" stroke-width="0.9"/></svg><svg style="left:1867px;top:747px" width="16" height="16" viewBox="0 0 16 16"><rect x="0.5" y="0.5" width="15" height="15" fill="#f4f4f0" stroke="#222"/><rect x="1" y="1" width="14" height="2.5" fill="#7aa0d0"/><path d="M6 6 L3.5 9 L6 12 M10 6 L12.5 9 L10 12" fill="none" stroke="#333" stroke-width="1.1"/></svg><svg style="left:1867px;top:773px" width="16" height="16" viewBox="0 0 16 16"><rect x="0" y="0" width="1.5" height="16" fill="#e03030"/><rect x="3" y="1" width="5" height="4" fill="#a8c4e4" stroke="#333" stroke-width="0.7"/><rect x="3" y="6" width="12" height="4" fill="#a8c4e4" stroke="#333" stroke-width="0.7"/><rect x="3" y="11" width="9" height="4" fill="#a8c4e4" stroke="#333" stroke-width="0.7"/></svg><div style="position:absolute;left:1867px;top:799px;width:16px;height:1px;background:#b8b8b8"></div><svg style="left:1867px;top:811px" width="16" height="16" viewBox="0 0 16 16"><path d="M2 14 L10 6" stroke="#4a7ac0" stroke-width="3"/><path d="M14 14 L5 5 M3 2 A3 3 0 1 0 7 6" fill="none" stroke="#888" stroke-width="2"/></svg><svg style="left:1867px;top:837px" width="16" height="16" viewBox="0 0 16 16"><path d="M1.5 0.5 H10 L14.5 5 V15.5 H1.5 Z" fill="#f2f2f2" stroke="#888"/><path d="M5 5 V9 A3 3 0 0 0 11 9 V5 M8 11 V15" fill="none" stroke="#555" stroke-width="1.5"/><rect x="6.5" y="12" width="3" height="3.5" fill="#2050c0"/></svg><svg style="left:1897px;top:91px" width="16" height="16" viewBox="0 0 16 16"><path d="M3 3 L12 12" stroke="#111" stroke-width="1.2"/><path d="M9 13 L13 13 L13 9 Z" fill="#111"/><rect x="0.5" y="0.5" width="4" height="4" transform="rotate(45 2.5 2.5)" fill="#aac" stroke="#00f"/><rect x="11" y="11" width="4" height="4" fill="#cec" stroke="#292"/></svg><div style="position:absolute;left:1897px;top:117px;width:16px;height:1px;background:#b8b8b8"></div><svg style="left:1897px;top:130px" width="16" height="16" viewBox="0 0 16 16"><path d="M3 4 H16 M3 4 V16" stroke="#444" stroke-dasharray="1.5 1.2" stroke-width="1.1"/><rect x="1" y="2" width="4" height="4" transform="rotate(45 3 4)" fill="#88f" stroke="#00f"/></svg><svg style="left:1897px;top:156px" width="16" height="16" viewBox="0 0 16 16"><path d="M14 1 V13 H1" fill="none" stroke="#4a4" stroke-dasharray="1.5 1.2" stroke-width="1.1"/></svg><svg style="left:1897px;top:182px" width="16" height="16" viewBox="0 0 16 16"><path d="M13 1 V13 H1" fill="none" stroke="#444" stroke-dasharray="1.5 1.2" stroke-width="1.1"/><rect x="11" y="11" width="4" height="4" transform="rotate(45 13 13)" fill="#aca" stroke="#292"/></svg><svg style="left:1897px;top:207px" width="16" height="16" viewBox="0 0 16 16"><path d="M13 1 V13 H1" fill="none" stroke="#444" stroke-dasharray="1.5 1.2" stroke-width="1.1"/><rect x="11" y="3" width="4" height="4" transform="rotate(45 13 5)" fill="#aca" stroke="#292"/></svg><svg style="left:1897px;top:233px" width="16" height="16" viewBox="0 0 16 16"><path d="M13 1 V13 H1" fill="none" stroke="#444" stroke-dasharray="1.5 1.2" stroke-width="1.1"/><circle cx="4" cy="5" r="1.6" fill="#aca" stroke="#292"/></svg><div style="position:absolute;left:1897px;top:259px;width:16px;height:1px;background:#b8b8b8"></div><svg style="left:1897px;top:271px" width="16" height="16" viewBox="0 0 16 16"><path d="M1 15 C1 8 5 6 10 5 C8 10 10 13 15 14" fill="none" stroke="#555" stroke-width="1.2"/><rect x="8" y="1" width="5" height="5" transform="rotate(45 10.5 3.5)" fill="#88f" stroke="#00f"/></svg><svg style="left:1897px;top:297px" width="16" height="16" viewBox="0 0 16 16"><path d="M1 2 C6 2 12 5 12 10 L10 15 M12 10 L15 13" fill="none" stroke="#2a8a2a" stroke-width="1.6"/></svg><svg style="left:1897px;top:323px" width="16" height="16" viewBox="0 0 16 16"><path d="M1 14 L15 2 M1 10 L15 6" stroke="#444" stroke-width="1.1"/><circle cx="8" cy="8" r="1.8" fill="#aca" stroke="#292"/></svg><svg style="left:1897px;top:349px" width="16" height="16" viewBox="0 0 16 16"><path d="M2 2 C8 2 12 6 11 12 M7 14 L15 8" fill="none" stroke="#555" stroke-width="1.1"/><circle cx="9" cy="12" r="2" fill="#aca" stroke="#292"/></svg><svg style="left:1897px;top:375px" width="16" height="16" viewBox="0 0 16 16"><path d="M1 2 C6 0 10 4 8 9 C7 12 9 15 15 10" fill="none" stroke="#555" stroke-width="1.2"/><rect x="5" y="3" width="4" height="4" fill="#aca" stroke="#292"/></svg><svg style="left:1897px;top:400px" width="16" height="16" viewBox="0 0 16 16"><path d="M1 15 L15 1" stroke="#e04040" stroke-width="1.1" stroke-dasharray="2 1"/><path d="M2 12 L6 14 M5 9 L9 11 M11 4 L15 6" stroke="#e04040" stroke-width="1.3"/><circle cx="8" cy="8" r="2" fill="#aca" stroke="#292"/></svg><svg style="left:1897px;top:427px" width="16" height="16" viewBox="0 0 16 16"><path d="M14 1 V14 H1" fill="none" stroke="#444" stroke-width="1.1"/><circle cx="6" cy="7" r="1.6" fill="#aca" stroke="#292"/></svg><svg style="left:1897px;top:453px" width="16" height="16" viewBox="0 0 16 16"><path d="M13 1 V13 H1" fill="none" stroke="#444" stroke-dasharray="1.5 1.2" stroke-width="1.1"/><path d="M5 3 V8 M2.5 5.5 H7.5" stroke="#222" stroke-width="1.2"/></svg><div style="position:absolute;left:1897px;top:479px;width:16px;height:1px;background:#b8b8b8"></div><svg style="left:1897px;top:491px" width="16" height="16" viewBox="0 0 16 16"><defs><linearGradient id="pgg" x1="0" y1="0" x2="1" y2="1"><stop offset="0" stop-color="#fff"/><stop offset="1" stop-color="#999"/></linearGradient></defs><rect x="2.5" y="0.5" width="11" height="15" fill="url(#pgg)" stroke="#222"/></svg><svg style="left:1897px;top:517px" width="16" height="16" viewBox="0 0 16 16"><path d="M4 0 V16 M8 0 V16 M12 0 V16 M0 4 H16 M0 8 H16 M0 12 H16" stroke="#0000e0" stroke-width="1.1"/></svg><svg style="left:1897px;top:543px" width="16" height="16" viewBox="0 0 16 16"><path d="M3 1 V15 M13 1 V15 M10 1 L6 15" stroke="#0000e0" stroke-width="1.2"/></svg><div style="position:absolute;left:34px;top:953px;width:1409px;height:20px;background:#f0f0f0"></div><div style="position:absolute;left:51px;top:953px;width:1390px;height:2px;background:#f8f8f8"></div><div style="position:absolute;left:245px;top:955px;width:840px;height:15px;background:#c8c8c8"></div><svg style="left:56px;top:958px" width="6" height="9" viewBox="0 0 6 9"><path d="M5 0.8 L1.2 4.5 L5 8.2" fill="none" stroke="#555" stroke-width="2"/></svg><svg style="left:1429px;top:958px" width="7" height="9" viewBox="0 0 7 9"><path d="M1 0.8 L4.8 4.5 L1 8.2" fill="none" stroke="#555" stroke-width="2"/></svg><svg style="left:1444px;top:955px" width="15" height="16" viewBox="0 0 15 16"><defs><linearGradient id="cms1" x1="0" y1="0" x2="0.3" y2="1"><stop offset="0" stop-color="#10c010"/><stop offset="0.5" stop-color="#10a0c0"/><stop offset="1" stop-color="#3030d0"/></linearGradient><linearGradient id="cms2" x1="0" y1="0" x2="1" y2="0"><stop offset="0.3" stop-color="#fff" stop-opacity="0"/><stop offset="1" stop-color="#d02040"/></linearGradient><pattern id="cmsd" width="2" height="2" patternUnits="userSpaceOnUse"><rect width="1" height="1" fill="#f0f0f0"/><rect x="1" y="1" width="1" height="1" fill="#f0f0f0"/></pattern></defs><path d="M0.5 0.5 L13 10 L4 15.5 Z" fill="url(#cms1)"/><path d="M0.5 0.5 L13 10 L4 15.5 Z" fill="url(#cms2)"/><path d="M0.5 0.5 L13 10 L4 15.5 Z" fill="url(#cmsd)" opacity="0.55"/></svg><div style="position:absolute;left:0px;top:975px;width:1906px;height:1px;background:#111"></div><svg style="left:0;top:976px" width="1920" height="17" viewBox="0 0 1920 17"><rect x="19" y="0" width="17" height="17" fill="#000000"/><rect x="36" y="0" width="17" height="17" fill="#1a1a1a"/><rect x="53" y="0" width="17" height="17" fill="#333333"/><rect x="70" y="0" width="17" height="17" fill="#4d4d4d"/><rect x="87" y="0" width="17" height="17" fill="#666666"/><rect x="104" y="0" width="17" height="17" fill="#808080"/><rect x="121" y="0" width="17" height="17" fill="#999999"/><rect x="138" y="0" width="17" height="17" fill="#b3b3b3"/><rect x="155" y="0" width="17" height="17" fill="#cccccc"/><rect x="172" y="0" width="17" height="17" fill="#e6e6e6"/><rect x="189" y="0" width="17" height="17" fill="#ececec"/><rect x="206" y="0" width="17" height="17" fill="#f2f2f2"/><rect x="223" y="0" width="17" height="17" fill="#f9f9f9"/><rect x="240" y="0" width="17" height="17" fill="#ffffff"/><rect x="257" y="0" width="17" height="17" fill="#800000"/><rect x="274" y="0" width="17" height="17" fill="#ff0000"/><rect x="291" y="0" width="17" height="17" fill="#808000"/><rect x="308" y="0" width="17" height="17" fill="#ffff00"/><rect x="325" y="0" width="17" height="17" fill="#008000"/><rect x="342" y="0" width="17" height="17" fill="#00ff00"/><rect x="359" y="0" width="17" height="17" fill="#008080"/><rect x="376" y="0" width="17" height="17" fill="#00ffff"/><rect x="393" y="0" width="17" height="17" fill="#000080"/><rect x="410" y="0" width="17" height="17" fill="#0000ff"/><rect x="427" y="0" width="17" height="17" fill="#800080"/><rect x="444" y="0" width="17" height="17" fill="#ff00ff"/><rect x="461" y="0" width="17" height="17" fill="#2b0000"/><rect x="478" y="0" width="17" height="17" fill="#550000"/><rect x="495" y="0" width="17" height="17" fill="#800000"/><rect x="512" y="0" width="17" height="17" fill="#aa0000"/><rect x="529" y="0" width="17" height="17" fill="#d40000"/><rect x="546" y="0" width="17" height="17" fill="#ff0000"/><rect x="563" y="0" width="17" height="17" fill="#ff2a2a"/><rect x="580" y="0" width="17" height="17" fill="#ff5555"/><rect x="597" y="0" width="17" height="17" fill="#ff8080"/><rect x="614" y="0" width="17" height="17" fill="#ffaaaa"/><rect x="631" y="0" width="17" height="17" fill="#ffd5d5"/><rect x="648" y="0" width="17" height="17" fill="#280b0b"/><rect x="665" y="0" width="17" height="17" fill="#501616"/><rect x="682" y="0" width="17" height="17" fill="#782121"/><rect x="699" y="0" width="17" height="17" fill="#a02c2c"/><rect x="716" y="0" width="17" height="17" fill="#c83737"/><rect x="733" y="0" width="17" height="17" fill="#d35f5f"/><rect x="750" y="0" width="17" height="17" fill="#de8787"/><rect x="767" y="0" width="17" height="17" fill="#e9afaf"/><rect x="784" y="0" width="17" height="17" fill="#f4d7d7"/><rect x="801" y="0" width="17" height="17" fill="#241c1c"/><rect x="818" y="0" width="17" height="17" fill="#483737"/><rect x="835" y="0" width="17" height="17" fill="#6c5353"/><rect x="852" y="0" width="17" height="17" fill="#916f6f"/><rect x="869" y="0" width="17" height="17" fill="#ac9393"/><rect x="886" y="0" width="17" height="17" fill="#c8b7b7"/><rect x="903" y="0" width="17" height="17" fill="#e3dbdb"/><rect x="920" y="0" width="17" height="17" fill="#2b1100"/><rect x="937" y="0" width="17" height="17" fill="#552200"/><rect x="954" y="0" width="17" height="17" fill="#803300"/><rect x="971" y="0" width="17" height="17" fill="#aa4400"/><rect x="988" y="0" width="17" height="17" fill="#d45500"/><rect x="1005" y="0" width="17" height="17" fill="#ff6600"/><rect x="1022" y="0" width="17" height="17" fill="#ff7f2a"/><rect x="1039" y="0" width="17" height="17" fill="#ff9955"/><rect x="1056" y="0" width="17" height="17" fill="#ffb380"/><rect x="1073" y="0" width="17" height="17" fill="#ffccaa"/><rect x="1090" y="0" width="17" height="17" fill="#ffe6d5"/><rect x="1107" y="0" width="17" height="17" fill="#28170b"/><rect x="1124" y="0" width="17" height="17" fill="#502d16"/><rect x="1141" y="0" width="17" height="17" fill="#784421"/><rect x="1158" y="0" width="17" height="17" fill="#a05a2c"/><rect x="1175" y="0" width="17" height="17" fill="#c87137"/><rect x="1192" y="0" width="17" height="17" fill="#d38d5f"/><rect x="1209" y="0" width="17" height="17" fill="#deaa87"/><rect x="1226" y="0" width="17" height="17" fill="#e9c6af"/><rect x="1243" y="0" width="17" height="17" fill="#f4e3d7"/><rect x="1260" y="0" width="17" height="17" fill="#241f1c"/><rect x="1277" y="0" width="17" height="17" fill="#483e37"/><rect x="1294" y="0" width="17" height="17" fill="#6c5d53"/><rect x="1311" y="0" width="17" height="17" fill="#917c6f"/><rect x="1328" y="0" width="17" height="17" fill="#ac9d93"/><rect x="1345" y="0" width="17" height="17" fill="#c8beb7"/><rect x="1362" y="0" width="17" height="17" fill="#e3dedb"/><rect x="1379" y="0" width="17" height="17" fill="#2b2200"/><rect x="1396" y="0" width="17" height="17" fill="#554400"/><rect x="1413" y="0" width="17" height="17" fill="#806600"/><rect x="1430" y="0" width="17" height="17" fill="#aa8800"/><rect x="1447" y="0" width="17" height="17" fill="#d4aa00"/><rect x="1464" y="0" width="17" height="17" fill="#ffcc00"/><rect x="1481" y="0" width="17" height="17" fill="#ffd42a"/><rect x="1498" y="0" width="17" height="17" fill="#ffdd55"/><rect x="1515" y="0" width="17" height="17" fill="#ffe680"/><rect x="1532" y="0" width="17" height="17" fill="#ffeeaa"/><rect x="1549" y="0" width="17" height="17" fill="#fff6d5"/><rect x="1566" y="0" width="17" height="17" fill="#28220b"/><rect x="1583" y="0" width="17" height="17" fill="#504416"/><rect x="1600" y="0" width="17" height="17" fill="#786721"/><rect x="1617" y="0" width="17" height="17" fill="#a0892c"/><rect x="1634" y="0" width="17" height="17" fill="#c8ab37"/><rect x="1651" y="0" width="17" height="17" fill="#d3bc5f"/><rect x="1668" y="0" width="17" height="17" fill="#decd87"/><rect x="1685" y="0" width="17" height="17" fill="#e9ddaf"/><rect x="1702" y="0" width="17" height="17" fill="#f4eed7"/><rect x="1719" y="0" width="17" height="17" fill="#24221c"/><rect x="1736" y="0" width="17" height="17" fill="#484537"/><rect x="1753" y="0" width="17" height="17" fill="#6c6753"/><rect x="1770" y="0" width="17" height="17" fill="#918a6f"/><rect x="1787" y="0" width="17" height="17" fill="#aca793"/><rect x="1804" y="0" width="17" height="17" fill="#c8c4b7"/><rect x="1821" y="0" width="17" height="17" fill="#e3e2db"/><rect x="1838" y="0" width="17" height="17" fill="#222b00"/><rect x="1855" y="0" width="17" height="17" fill="#445500"/><rect x="1872" y="0" width="17" height="17" fill="#668000"/><rect x="1889" y="0" width="15" height="17" fill="#88aa00"/><rect x="1" y="0" width="18" height="17" fill="#fff"/><path d="M1.5 0.5 L18.5 16.5 M18.5 0.5 L1.5 16.5" stroke="#8b1a1a" stroke-width="1.4"/><rect x="1" y="0" width="18" height="17" fill="none" stroke="#111" stroke-width="1"/></svg><div style="position:absolute;left:0px;top:993px;width:1904px;height:2px;background:#fff"></div><svg style="left:1909px;top:979px" width="6" height="9" viewBox="0 0 6 9"><path d="M5.5 0 L0 4.5 L5.5 9 Z" fill="#111"/></svg><div style="position:absolute;left:0px;top:995px;width:1920px;height:16px;background:#f0f0f0"></div><div style="position:absolute;left:17px;top:997px;width:484px;height:14px;background:#c8c8c8"></div><svg style="left:5px;top:999px" width="6" height="9" viewBox="0 0 6 9"><path d="M5 0.8 L1.2 4.5 L5 8.2" fill="none" stroke="#bbb" stroke-width="1.5"/></svg><svg style="left:1896px;top:999px" width="6" height="9" viewBox="0 0 6 9"><path d="M1 0.8 L4.8 4.5 L1 8.2" fill="none" stroke="#555" stroke-width="1.5"/></svg><div style="position:absolute;left:0px;top:1011px;width:1920px;height:29px;background:#f0f0f0"></div><div class="t" style="left:2px;top:1012px;">Wypełnienie: <b>u</b></div><div style="position:absolute;left:82px;top:1012px;width:43px;height:14px;background:#800080"></div><div class="t" style="left:2px;top:1026px;">Kontur:</div><div class="t" style="left:72px;top:1026px;"><b>w</b></div><div class="t" style="left:93px;top:1026px;"><i>Brak</i></div><div class="t" style="left:129px;top:1019px;">K:</div><div style="position:absolute;left:140px;top:1015px;width:27px;height:21px;background:#fff;border:1px solid #acacac"><div class="t" style="left:2px;top:2px;font-size:11.5px">100</div></div><div style="position:absolute;left:167px;top:1016px;width:11px;height:19px;background:#f0f0f0;border:1px solid #d0d0d0"></div><svg style="left:169px;top:1019px" width="7" height="13" viewBox="0 0 7 13"><path d="M0.5 4 L3.5 0.5 L6.5 4 Z" fill="#222"/><path d="M0.5 9 L3.5 12.5 L6.5 9 Z" fill="#222"/><rect x="0" y="6.0" width="7" height="1" fill="#bbb"/></svg><div style="position:absolute;left:180px;top:1012px;width:1px;height:28px;background:#c8c8c8"></div><svg style="left:185px;top:1017px" width="17" height="14" viewBox="0 0 17 14"><path d="M1 8 C4 3 13 3 16 8 C13 12 4 12 1 8 Z" fill="#fff" stroke="#111" stroke-width="1.3"/><circle cx="8.5" cy="7.8" r="3" fill="#111"/><path d="M3 4 L2 1 M6 3 L5.5 0 M9 3 V0 M12 3 L12.5 0 M14.5 4 L15.5 1" stroke="#111" stroke-width="1"/></svg><svg style="left:209px;top:1017px" width="13" height="16" viewBox="0 0 13 16"><path d="M3 8 V5 A3.5 3.5 0 0 1 10 5 V6" fill="none" stroke="#333" stroke-width="1.5"/><rect x="1.5" y="8" width="10" height="7" rx="1" fill="#f0d860" stroke="#555" stroke-width="0.9"/><rect x="6" y="10" width="1.4" height="3" fill="#222"/></svg><div style="position:absolute;left:227px;top:1013px;width:129px;height:27px;background:#fff;border:1px solid #acacac"><div class="t" style="left:4px;top:5px;font-size:11px"><span style="font-size:8px;position:relative;top:-1px">■</span><b> Layer 1</b></div></div><div style="position:absolute;left:339px;top:1014px;width:16px;height:25px;background:#dcdcdc;border-left:1px solid #acacac"></div><svg style="left:343px;top:1023px" width="8" height="6" viewBox="0 0 8 6"><path d="M0.5 0.8 L4 4.5 L7.5 0.8" fill="none" stroke="#555" stroke-width="1.4"/></svg><div class="t" style="left:361px;top:1019px;">Tworzy różnicę zaznaczonych ścieżek (dalszy minus bliższy)</div><div style="position:absolute;left:1760px;top:1012px;width:1px;height:28px;background:#c8c8c8"></div><div class="t" style="left:1764px;top:1013px;">X:</div><div class="t" style="left:1764px;top:1027px;">Y:</div><div class="t" style="left:1770px;width:54px;top:1013px;text-align:right;font-family:'Liberation Mono';font-size:11px;letter-spacing:0">-22,18</div><div class="t" style="left:1770px;width:54px;top:1027px;text-align:right;font-family:'Liberation Mono';font-size:11px;letter-spacing:0">68,73</div><div class="t" style="left:1833px;top:1019px;">Z:</div><div style="position:absolute;left:1845px;top:1015px;width:46px;height:21px;background:#fff;border:1px solid #acacac"><div class="t" style="left:3px;top:2px;font-size:11.5px">1100%</div></div><div style="position:absolute;left:1891px;top:1016px;width:11px;height:19px;background:#f0f0f0;border:1px solid #d0d0d0"></div><svg style="left:1893px;top:1019px" width="7" height="13" viewBox="0 0 7 13"><path d="M0.5 4 L3.5 0.5 L6.5 4 Z" fill="#222"/><path d="M0.5 9 L3.5 12.5 L6.5 9 Z" fill="#222"/><rect x="0" y="6.0" width="7" height="1" fill="#bbb"/></svg><svg style="left:1905px;top:1029px" width="10" height="10" viewBox="0 0 10 10"><g fill="#bbb"><rect x="8" y="0" width="2" height="2"/><rect x="4" y="4" width="2" height="2"/><rect x="8" y="4" width="2" height="2"/><rect x="0" y="8" width="2" height="2"/><rect x="4" y="8" width="2" height="2"/><rect x="8" y="8" width="2" height="2"/></g></svg><div style="position:absolute;left:240px;top:46px;width:270px;height:513px;background:rgba(0,0,0,0.18);filter:blur(1px)"></div><div style="position:absolute;left:238px;top:44px;width:268px;height:511px;background:#f0f0f0;border:1px solid #979797"></div><div style="position:absolute;left:240px;top:151px;width:264px;height:24px;background:#d1e3f5;border:1px solid #7fb2e8"></div><div style="position:absolute;left:244px;top:122px;width:259px;height:1px;background:#d7d7d7"></div><div style="position:absolute;left:244px;top:123px;width:259px;height:1px;background:#fcfcfc"></div><div style="position:absolute;left:244px;top:275px;width:259px;height:1px;background:#d7d7d7"></div><div style="position:absolute;left:244px;top:276px;width:259px;height:1px;background:#fcfcfc"></div><div style="position:absolute;left:244px;top:331px;width:259px;height:1px;background:#d7d7d7"></div><div style="position:absolute;left:244px;top:332px;width:259px;height:1px;background:#fcfcfc"></div><div style="position:absolute;left:244px;top:434px;width:259px;height:1px;background:#d7d7d7"></div><div style="position:absolute;left:244px;top:435px;width:259px;height:1px;background:#fcfcfc"></div><div style="position:absolute;left:244px;top:490px;width:259px;height:1px;background:#d7d7d7"></div><div style="position:absolute;left:244px;top:491px;width:259px;height:1px;background:#fcfcfc"></div><div class="t" style="left:269px;top:52px;">O<u>b</u>iekt w ścieżkę</div><div class="t" style="left:300px;width:199px;top:52px;text-align:right;letter-spacing:0.3px">Shift+Ctrl+C</div><svg style="left:245px;top:51px" width="17" height="17" viewBox="0 0 17 17"><path d="M4 9 C2 3 5 1 8 1.5 C10 2 9.5 6 9.5 9 C9.5 14 12 15 15 14" fill="none" stroke="#555" stroke-width="1.1"/><rect x="7" y="1.5" width="3" height="3" fill="#fff" stroke="#00f" stroke-width="1.2"/><rect x="1.5" y="7.5" width="3" height="3" fill="#fff" stroke="#00f" stroke-width="1.2"/><rect x="12.5" y="12.5" width="3" height="3" fill="#fff" stroke="#00f" stroke-width="1.2"/></svg><div class="t" style="left:269px;top:76px;"><u>K</u>ontur w ścieżkę</div><div class="t" style="left:300px;width:199px;top:76px;text-align:right;letter-spacing:0.3px">Ctrl+Alt+C</div><svg style="left:245px;top:75px" width="17" height="17" viewBox="0 0 17 17"><path d="M1 12 L9 3 H15 L8 12 L5 15 Z" fill="#a9c2de"/><path d="M9 3 H15" stroke="#555"/><rect x="7" y="1.5" width="3" height="3" fill="#fff" stroke="#00f" stroke-width="1.2"/><rect x="1.5" y="6.5" width="3" height="3" fill="#fff" stroke="#00f" stroke-width="1.2"/><rect x="10.5" y="5" width="3" height="3" fill="#fff" stroke="#00f" stroke-width="1.2"/><rect x="5" y="10" width="3" height="3" fill="#fff" stroke="#00f" stroke-width="1.2"/></svg><div class="t" style="left:269px;top:100px;">Wektoryzuj bitma<u>p</u>ę...</div><div class="t" style="left:300px;width:199px;top:100px;text-align:right;letter-spacing:0.3px">Shift+Alt+B</div><svg style="left:245px;top:99px" width="17" height="17" viewBox="0 0 17 17"><rect x="1.5" y="7.5" width="8" height="8" fill="none" stroke="#222" stroke-width="1"/><rect x="3.5" y="5.5" width="8" height="8" fill="#f0f0f0" stroke="#222" stroke-width="1"/><circle cx="10.5" cy="6.5" r="5.5" fill="#f0f0f0" stroke="#222" stroke-width="1"/><circle cx="10.5" cy="6.5" r="3.5" fill="#fff" stroke="#222" stroke-width="1"/></svg><div class="t" style="left:269px;top:132px;">Su<u>m</u>a</div><div class="t" style="left:300px;width:199px;top:132px;text-align:right;letter-spacing:0.3px">Ctrl++</div><svg style="left:245px;top:131px" width="17" height="17" viewBox="0 0 17 17"><path d="M1 15 V6 H5.6 A5 5 0 1 1 10 11 V15 Z" fill="#b3c8e0" stroke="#111" stroke-width="1.4"/></svg><div class="t" style="left:269px;top:156px;">Różnic<u>a</u></div><div class="t" style="left:300px;width:199px;top:156px;text-align:right;letter-spacing:0.3px">Ctrl+-</div><svg style="left:245px;top:155px" width="17" height="17" viewBox="0 0 17 17"><path d="M1 15 V6 H5.6 A5 5 0 0 0 10 11 V15 Z" fill="#b3c8e0" stroke="#111" stroke-width="1.4"/><path d="M15.5 6 A5 5 0 1 1 5.5 6 A5 5 0 1 1 15.5 6 Z" fill="none" stroke="#e03030" stroke-width="1" stroke-dasharray="1.2 1.2"/></svg><div class="t" style="left:269px;top:180px;">Część wspó<u>l</u>na</div><div class="t" style="left:300px;width:199px;top:180px;text-align:right;letter-spacing:0.3px">Ctrl+*</div><svg style="left:245px;top:179px" width="17" height="17" viewBox="0 0 17 17"><path d="M1 6 H10 V15 H1 Z" fill="none" stroke="#e03030" stroke-width="1" stroke-dasharray="1.2 1.2"/><path d="M15.5 6 A5 5 0 1 1 5.5 6 A5 5 0 1 1 15.5 6 Z" fill="none" stroke="#e03030" stroke-width="1" stroke-dasharray="1.2 1.2"/><path d="M5.6 6 H10 V11 A5 5 0 0 1 5.6 6 Z" fill="#b3c8e0" stroke="#111" stroke-width="1.2"/></svg><div class="t" style="left:269px;top:204px;"><u>W</u>ykluczenie</div><div class="t" style="left:300px;width:199px;top:204px;text-align:right;letter-spacing:0.3px">Ctrl+^</div><svg style="left:245px;top:203px" width="17" height="17" viewBox="0 0 17 17"><path d="M1 6 H10 V15 H1 Z" fill="#b3c8e0" stroke="#111" stroke-width="1.3"/><path d="M15.5 6 A5 5 0 1 1 5.5 6 A5 5 0 1 1 15.5 6 Z" fill="#b3c8e0" stroke="#111" stroke-width="1.3"/><path d="M5.6 6 H10 V11 A5 5 0 0 1 5.6 6 Z" fill="#f4f4f4" stroke="#111" stroke-width="1.1"/></svg><div class="t" style="left:269px;top:228px;"><u>P</u>odział</div><div class="t" style="left:300px;width:199px;top:228px;text-align:right;letter-spacing:0.3px">Ctrl+/</div><svg style="left:245px;top:227px" width="17" height="17" viewBox="0 0 17 17"><path d="M1 6 H10 V15 H1 Z" fill="#b3c8e0" stroke="#111" stroke-width="1.3"/><path d="M5.6 6 A5 5 0 0 0 10 11" fill="none" stroke="#111" stroke-width="1.3"/><path d="M15.5 6 A5 5 0 1 1 5.5 6 A5 5 0 1 1 15.5 6 Z" fill="none" stroke="#e03030" stroke-width="1" stroke-dasharray="1.2 1.2"/></svg><div class="t" style="left:269px;top:252px;">Roz<u>c</u>ięcie ścieżki</div><div class="t" style="left:300px;width:199px;top:252px;text-align:right;letter-spacing:0.3px">Ctrl+Alt+/</div><svg style="left:245px;top:251px" width="17" height="17" viewBox="0 0 17 17"><path d="M1 15 V6 H5.6 A5 5 0 0 0 10 11 V15 Z" fill="#fff" stroke="#111" stroke-width="1.3"/><path d="M15.5 6 A5 5 0 1 1 5.5 6 A5 5 0 1 1 15.5 6 Z" fill="none" stroke="#e03030" stroke-width="1" stroke-dasharray="1.2 1.2"/></svg><div class="t" style="left:269px;top:284px;">P<u>o</u>łącz</div><div class="t" style="left:300px;width:199px;top:284px;text-align:right;letter-spacing:0.3px">Ctrl+K</div><svg style="left:245px;top:283px" width="17" height="17" viewBox="0 0 17 17"><path d="M1 6 H10 V15 H1 Z" fill="#b3c8e0" stroke="#00f" stroke-width="1.3"/><path d="M15.5 6 A5 5 0 1 1 5.5 6 A5 5 0 1 1 15.5 6 Z" fill="#b3c8e0" stroke="#00f" stroke-width="1.3"/><path d="M5.6 6 H10 V11" fill="none" stroke="#00f" stroke-width="1.2"/></svg><div class="t" style="left:269px;top:308px;"><u>R</u>ozdziel</div><div class="t" style="left:300px;width:199px;top:308px;text-align:right;letter-spacing:0.3px">Shift+Ctrl+K</div><svg style="left:245px;top:307px" width="17" height="17" viewBox="0 0 17 17"><path d="M1 15 V6 H5.6 A5 5 0 1 1 10 11 V15 Z" fill="#b3c8e0" stroke="#00f" stroke-width="1.4"/></svg><div class="t" style="left:269px;top:340px;">Odsuń do wewną<u>t</u>rz</div><div class="t" style="left:300px;width:199px;top:340px;text-align:right;letter-spacing:0.3px">Ctrl+(</div><svg style="left:245px;top:339px" width="17" height="17" viewBox="0 0 17 17"><path d="M0.5 16 V1 A15 15 0 0 1 15.5 16 Z" fill="#a3bddb"/><path d="M0.5 16 V8 A8 8 0 0 1 8.5 16 Z" fill="#bfd2e8"/><path d="M0.5 1 A15 15 0 0 1 15.5 16" fill="none" stroke="#111" stroke-width="1.3" stroke-dasharray="1.3 1.3"/><path d="M0.5 8 A8 8 0 0 1 8.5 16" fill="none" stroke="#111" stroke-width="1.3"/><path d="M12 4 L7 9 L7 4 Z" fill="#000" transform="translate(0,-1)"/></svg><div class="t" style="left:269px;top:364px;">Odsuń na z<u>e</u>wnątrz</div><div class="t" style="left:300px;width:199px;top:364px;text-align:right;letter-spacing:0.3px">Ctrl+)</div><svg style="left:245px;top:363px" width="17" height="17" viewBox="0 0 17 17"><path d="M0.5 16 V1 A15 15 0 0 1 15.5 16 Z" fill="#a3bddb"/><path d="M0.5 16 V8 A8 8 0 0 1 8.5 16 Z" fill="#bfd2e8"/><path d="M0.5 1 A15 15 0 0 1 15.5 16" fill="none" stroke="#111" stroke-width="1.3"/><path d="M0.5 8 A8 8 0 0 1 8.5 16" fill="none" stroke="#222" stroke-width="1.1" stroke-dasharray="1.2 1.2"/><path d="M4.5 5.5 L10 11 L10 5 Z" fill="#000" transform="translate(0,0)"/></svg><div class="t" style="left:269px;top:388px;">Odsuń <u>d</u>ynamicznie</div><div class="t" style="left:300px;width:199px;top:388px;text-align:right;letter-spacing:0.3px">Ctrl+J</div><svg style="left:245px;top:387px" width="17" height="17" viewBox="0 0 17 17"><path d="M0.5 16 V1 A15 15 0 0 1 15.5 16 Z" fill="#a3bddb"/><path d="M0.5 16 V8 A8 8 0 0 1 8.5 16 Z" fill="#bfd2e8"/><path d="M0.5 1 A15 15 0 0 1 15.5 16" fill="none" stroke="#111" stroke-width="1.3" stroke-dasharray="1.3 1.3"/><path d="M0.5 4.5 A11.5 11.5 0 0 1 12 16" fill="none" stroke="#111" stroke-width="1.3"/><path d="M0.5 8 A8 8 0 0 1 8.5 16" fill="none" stroke="#222" stroke-width="1.1" stroke-dasharray="1.2 1.2"/><rect x="6" y="6.5" width="3.5" height="3.5" fill="#99c" stroke="#00f" stroke-width="1.1"/></svg><div class="t" style="left:269px;top:412px;">Odsuń łą<u>c</u>znie</div><div class="t" style="left:300px;width:199px;top:412px;text-align:right;letter-spacing:0.3px">Ctrl+Alt+J</div><svg style="left:245px;top:411px" width="17" height="17" viewBox="0 0 17 17"><path d="M0.5 16 V1 A15 15 0 0 1 15.5 16 Z" fill="#a3bddb"/><path d="M0.5 16 V8 A8 8 0 0 1 8.5 16 Z" fill="#bfd2e8"/><path d="M0.5 1 A15 15 0 0 1 15.5 16" fill="none" stroke="#111" stroke-width="1.3"/><path d="M0.5 8 A8 8 0 0 1 8.5 16" fill="none" stroke="#111" stroke-width="1.3"/><rect x="9" y="3.5" width="3.5" height="3.5" fill="#99c" stroke="#00f" stroke-width="1.1"/></svg><div class="t" style="left:269px;top:444px;"><u>U</u>prość</div><div class="t" style="left:300px;width:199px;top:444px;text-align:right;letter-spacing:0.3px">Ctrl+L</div><svg style="left:245px;top:443px" width="17" height="17" viewBox="0 0 17 17"><path d="M1 6 L3 2 L5 6 L7 2 L9 5 L11 2 L13 6 L16 3" fill="none" stroke="#111"/><path d="M1 11 Q4 8 8 11 T16 11" fill="none" stroke="#111"/><path d="M1 15 H16" stroke="#111" stroke-width="1.2"/></svg><div class="t" style="left:269px;top:468px;">Odwróć kieru<u>n</u>ek</div><svg style="left:245px;top:467px" width="17" height="17" viewBox="0 0 17 17"><path d="M2 4 H12" stroke="#111" stroke-width="1.2"/><path d="M10 1.5 L13 4 L10 6.5" fill="none" stroke="#111" stroke-width="1.2"/><path d="M5 13 H15" stroke="#111" stroke-width="1.2"/><path d="M7 10.5 L4 13 L7 15.5" fill="none" stroke="#111" stroke-width="1.2"/><path d="M16 1 C14 6 4 7 1 16" fill="none" stroke="#555"/><rect x="6.5" y="6.5" width="3" height="3" fill="#fff" stroke="#00f"/></svg><div class="t" style="left:269px;top:498px;">Edytor efektów ścieżki...</div><div class="t" style="left:300px;width:199px;top:498px;text-align:right;letter-spacing:0.3px">Shift+Ctrl+7</div><div class="t" style="left:269px;top:517px;">Wklej e<u>f</u>ekt ścieżki</div><div class="t" style="left:300px;width:199px;top:517px;text-align:right;letter-spacing:0.3px">Ctrl+7</div><div class="t" style="left:269px;top:536px;">U<u>s</u>uń efekt ścieżki</div></body></html>
